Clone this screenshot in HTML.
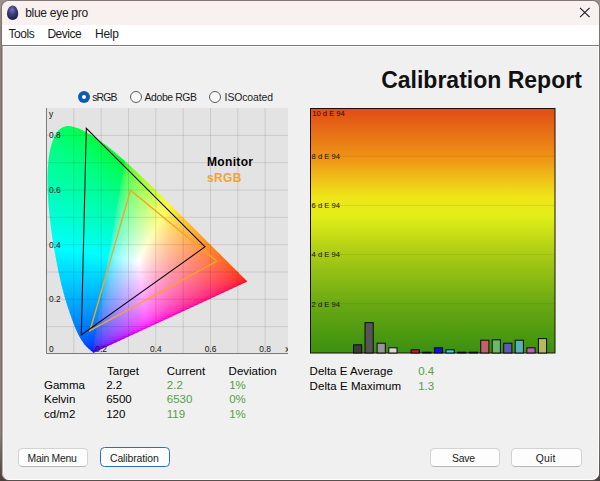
<!DOCTYPE html>
<html><head><meta charset="utf-8"><title>blue eye pro</title><style>
html,body{margin:0;padding:0}
body{width:600px;height:481px;overflow:hidden;position:relative;background:linear-gradient(#9a8f8b,#8f807a 10%,#8f807a 90%,#4a3e38);font-family:"Liberation Sans",sans-serif;color:#000}
.abs{position:absolute}
#win{position:absolute;left:2px;top:1px;width:597px;height:478.5px;background:#f0f0f0;border-radius:7px;overflow:hidden;box-shadow:0 0 0 1px rgba(105,95,92,.5)}
#title{position:absolute;left:0;top:0;width:597px;height:24px;background:#f9f1ef}
#menu{position:absolute;left:0;top:24px;width:597px;height:19.5px;background:#fff}
#mline{position:absolute;left:0;top:43.5px;width:597px;height:1.5px;background:#7c7c7c;box-shadow:0 1px 0 #f9f9f9}
#lline{position:absolute;left:0;top:45px;width:597px;height:433.5px;border-radius:0 0 7px 7px;box-shadow:inset -1px -1px 0 #fff,inset 1px 0 0 rgba(120,112,110,.55),inset 2px 0 0 rgba(255,255,255,.6)}
.t{position:absolute;white-space:nowrap;line-height:1}
.btn{position:absolute;border:1px solid #d2d2d2;border-bottom-color:#b8b8b8;border-radius:4.5px;background:#fdfdfd;box-sizing:border-box}
.g{color:#55a03a}
</style></head><body>
<div id="win"><div id="title"></div><div id="menu"></div><div id="mline"></div><div id="lline"></div></div>
<svg class="abs" style="left:5px;top:4px" width="16" height="18" viewBox="0 0 16 18"><defs><radialGradient id="egg" cx="45%" cy="30%" r="75%"><stop offset="0" stop-color="#7676b0"/><stop offset=".45" stop-color="#3c3c7c"/><stop offset="1" stop-color="#191940"/></radialGradient></defs><path d="M7.6 1.6C11 1.6 13.2 6 13.2 9.8C13.2 13.6 10.8 16 7.6 16C4.4 16 2 13.6 2 9.8C2 6 4.2 1.6 7.6 1.6Z" fill="url(#egg)"/></svg>
<div class="t" style="left:25.2px;top:7.24px;font-size:12px;letter-spacing:-0.28px;color:#1a1a1a">blue eye pro</div>
<svg class="abs" style="left:579px;top:7px" width="12" height="11" viewBox="0 0 12 11"><path d="M1 .9L10.6 10.1M10.6 .9L1 10.1" stroke="#1c1c1c" stroke-width="1.15" fill="none"/></svg>
<div class="t" style="left:8.4px;top:27.94px;font-size:12px;letter-spacing:-0.42px;color:#1a1a1a">Tools</div>
<div class="t" style="left:47.4px;top:27.94px;font-size:12px;letter-spacing:-0.5px;color:#1a1a1a">Device</div>
<div class="t" style="left:95.1px;top:27.94px;font-size:12px;letter-spacing:-0.3px;color:#1a1a1a">Help</div>
<div class="t" style="left:381.2px;top:68.83px;font-size:23px;font-weight:bold;color:#111">Calibration Report</div>
<div class="abs" style="left:77.8px;top:90.6px;width:12.4px;height:12.4px;border-radius:50%;background:#0f5cae"></div><div class="abs" style="left:81.7px;top:94.5px;width:4.6px;height:4.6px;border-radius:50%;background:#fff"></div>
<div class="t" style="left:92.2px;top:92.70px;font-size:10.4px;letter-spacing:-0.8px;color:#1a1a1a">sRGB</div>
<div class="abs" style="left:129.5px;top:90.6px;width:12.4px;height:12.4px;border-radius:50%;box-sizing:border-box;border:1px solid #5c5c5c;background:#f8f8f8"></div>
<div class="t" style="left:144.6px;top:92.70px;font-size:10.4px;letter-spacing:-0.4px;color:#1a1a1a">Adobe RGB</div>
<div class="abs" style="left:209.10000000000002px;top:90.6px;width:12.4px;height:12.4px;border-radius:50%;box-sizing:border-box;border:1px solid #5c5c5c;background:#f8f8f8"></div>
<div class="t" style="left:224.6px;top:92.70px;font-size:10.4px;letter-spacing:-0.08px;color:#1a1a1a">ISOcoated</div>
<svg class="abs" style="left:46px;top:108px" width="242" height="246" viewBox="0 0 242 246"><rect width="242" height="246" fill="#e3e3e3"/><defs><clipPath id="loc"><path d="M48.1 244.6L48.1 244.6L48.1 244.6L48.0 244.6L48.0 244.7L48.0 244.7L48.0 244.7L47.9 244.6L47.9 244.7L47.9 244.7L47.9 244.7L47.8 244.7L47.8 244.7L47.8 244.7L47.7 244.7L47.7 244.7L47.6 244.7L47.6 244.7L47.5 244.7L47.4 244.7L47.3 244.6L47.2 244.5L47.1 244.5L47.0 244.4L46.8 244.3L46.7 244.1L46.5 244.0L46.2 243.8L46.0 243.6L45.7 243.3L45.4 243.0L45.1 242.7L44.7 242.4L44.3 242.0L43.8 241.6L43.3 241.2L42.7 240.7L42.1 240.1L41.4 239.5L40.7 238.7L39.8 237.9L39.0 236.9L38.0 235.8L37.0 234.3L35.8 232.5L34.4 230.2L32.9 227.5L31.3 224.2L29.5 220.2L27.6 215.4L25.5 209.7L23.1 203.1L20.6 195.4L18.0 186.6L15.4 176.6L12.9 165.4L10.4 153.1L8.0 140.0L5.9 126.4L4.1 112.6L2.7 98.8L1.8 85.5L1.5 73.0L1.8 61.3L2.7 50.5L4.3 41.0L6.6 32.9L9.5 26.6L12.9 22.1L16.7 19.3L20.8 18.1L25.1 18.3L29.5 19.4L33.9 21.1L38.4 23.3L42.8 25.8L47.0 28.3L51.2 31.0L55.2 33.8L59.3 36.8L63.3 39.8L67.2 43.0L71.2 46.4L75.1 49.8L79.0 53.2L82.9 56.8L86.8 60.4L90.7 64.1L94.7 67.8L98.6 71.6L102.5 75.3L106.4 79.1L110.3 83.0L114.1 86.8L118.0 90.6L121.9 94.4L125.7 98.2L129.5 102.0L133.2 105.7L136.9 109.4L140.6 113.0L144.1 116.6L147.7 120.1L151.1 123.5L154.4 126.8L157.7 130.1L160.8 133.2L163.8 136.2L166.7 139.0L169.3 141.7L171.9 144.2L174.3 146.6L176.6 148.9L178.7 151.0L180.7 152.9L182.5 154.7L184.1 156.4L185.6 157.9L187.0 159.3L188.3 160.6L189.5 161.7L190.5 162.8L191.5 163.8L192.4 164.6L193.2 165.4L194.0 166.2L194.7 166.9L195.3 167.5L195.9 168.2L196.5 168.7L197.0 169.2L197.5 169.7L197.9 170.1L198.3 170.5L198.6 170.8L198.9 171.1L199.2 171.4L199.4 171.6L199.6 171.8L199.8 172.0L200.0 172.2L200.1 172.3L200.3 172.5L200.4 172.6L200.5 172.7L200.6 172.8L200.6 172.8L200.7 172.9L200.8 173.0L200.9 173.1L200.9 173.1L201.0 173.2L201.1 173.3L201.1 173.3L201.2 173.4L201.2 173.4L201.2 173.4L201.3 173.5L201.3 173.5L201.3 173.5L201.3 173.5Z"/></clipPath><linearGradient id="r0" gradientUnits="userSpaceOnUse" x1="14.5" x2="31.5"><stop offset="0" stop-color="#00ff64"/><stop offset="1" stop-color="#00ff4a"/></linearGradient><linearGradient id="r1" gradientUnits="userSpaceOnUse" x1="12.5" x2="36.5"><stop offset="0" stop-color="#00ff69"/><stop offset="0.583" stop-color="#00ff57"/><stop offset="1" stop-color="#0f4"/></linearGradient><linearGradient id="r2" gradientUnits="userSpaceOnUse" x1="10.5" x2="40.5"><stop offset="0" stop-color="#00ff6e"/><stop offset="0.6" stop-color="#00ff57"/><stop offset="1" stop-color="#00ff40"/></linearGradient><linearGradient id="r3" gradientUnits="userSpaceOnUse" x1="8.5" x2="43.5"><stop offset="0" stop-color="#00ff72"/><stop offset="0.6" stop-color="#00ff59"/><stop offset="1" stop-color="#00ff3e"/></linearGradient><linearGradient id="r4" gradientUnits="userSpaceOnUse" x1="7.5" x2="47.5"><stop offset="0" stop-color="#00ff76"/><stop offset="0.6" stop-color="#00ff5a"/><stop offset="1" stop-color="#00ff38"/></linearGradient><linearGradient id="r5" gradientUnits="userSpaceOnUse" x1="6.5" x2="50.5"><stop offset="0" stop-color="#00ff79"/><stop offset="0.614" stop-color="#00ff5a"/><stop offset="0.841" stop-color="#00ff48"/><stop offset="1" stop-color="#00ff35"/></linearGradient><linearGradient id="r6" gradientUnits="userSpaceOnUse" x1="5.5" x2="53.5"><stop offset="0" stop-color="#00ff7d"/><stop offset="0.625" stop-color="#00ff5b"/><stop offset="0.854" stop-color="#00ff46"/><stop offset="1" stop-color="#00ff32"/></linearGradient><linearGradient id="r7" gradientUnits="userSpaceOnUse" x1="4.5" x2="56.5"><stop offset="0" stop-color="#00ff80"/><stop offset="0.654" stop-color="#00ff5a"/><stop offset="0.865" stop-color="#0f4"/><stop offset="1" stop-color="#00ff2e"/></linearGradient><linearGradient id="r8" gradientUnits="userSpaceOnUse" x1="4.5" x2="59.5"><stop offset="0" stop-color="#00ff82"/><stop offset="0.364" stop-color="#00ff6f"/><stop offset="0.655" stop-color="#00ff5a"/><stop offset="0.873" stop-color="#00ff42"/><stop offset="1" stop-color="#00ff2a"/></linearGradient><linearGradient id="r9" gradientUnits="userSpaceOnUse" x1="3.5" x2="61.5"><stop offset="0" stop-color="#00ff85"/><stop offset="0.362" stop-color="#00ff72"/><stop offset="0.655" stop-color="#00ff5c"/><stop offset="0.862" stop-color="#00ff45"/><stop offset="1" stop-color="#00ff2a"/></linearGradient><linearGradient id="r10" gradientUnits="userSpaceOnUse" x1="3.5" x2="64.5"><stop offset="0" stop-color="#0f8"/><stop offset="0.377" stop-color="#00ff73"/><stop offset="0.672" stop-color="#00ff5b"/><stop offset="0.885" stop-color="#00ff40"/><stop offset="1" stop-color="#00ff25"/></linearGradient><linearGradient id="r11" gradientUnits="userSpaceOnUse" x1="2.5" x2="66.5"><stop offset="0" stop-color="#00ff8b"/><stop offset="0.375" stop-color="#00ff75"/><stop offset="0.672" stop-color="#00ff5d"/><stop offset="0.875" stop-color="#00ff43"/><stop offset="0.953" stop-color="#00ff34"/><stop offset="1" stop-color="#00ff25"/></linearGradient><linearGradient id="r12" gradientUnits="userSpaceOnUse" x1="2.5" x2="69.5"><stop offset="0" stop-color="#00ff8d"/><stop offset="0.403" stop-color="#00ff75"/><stop offset="0.701" stop-color="#00ff5b"/><stop offset="0.896" stop-color="#00ff3e"/><stop offset="0.955" stop-color="#00ff30"/><stop offset="1" stop-color="#00ff1e"/></linearGradient><linearGradient id="r13" gradientUnits="userSpaceOnUse" x1="1.5" x2="71.5"><stop offset="0" stop-color="#00ff90"/><stop offset="0.4" stop-color="#00ff78"/><stop offset="0.7" stop-color="#00ff5d"/><stop offset="0.9" stop-color="#00ff3f"/><stop offset="0.957" stop-color="#00ff30"/><stop offset="1" stop-color="#00ff1e"/></linearGradient><linearGradient id="r14" gradientUnits="userSpaceOnUse" x1="1.5" x2="74.5"><stop offset="0" stop-color="#00ff92"/><stop offset="0.425" stop-color="#00ff78"/><stop offset="0.726" stop-color="#00ff5a"/><stop offset="0.918" stop-color="#00ff38"/><stop offset="0.973" stop-color="#00ff26"/><stop offset="1" stop-color="#00ff13"/></linearGradient><linearGradient id="r15" gradientUnits="userSpaceOnUse" x1="1.5" x2="76.5"><stop offset="0" stop-color="#00ff94"/><stop offset="0.413" stop-color="#00ff7a"/><stop offset="0.72" stop-color="#00ff5c"/><stop offset="0.84" stop-color="#00ff4a"/><stop offset="0.92" stop-color="#00ff39"/><stop offset="0.973" stop-color="#00ff26"/><stop offset="1" stop-color="#00ff13"/></linearGradient><linearGradient id="r16" gradientUnits="userSpaceOnUse" x1="1.5" x2="78.5"><stop offset="0" stop-color="#00ff97"/><stop offset="0.416" stop-color="#00ff7c"/><stop offset="0.727" stop-color="#00ff5d"/><stop offset="0.844" stop-color="#00ff4b"/><stop offset="0.922" stop-color="#00ff39"/><stop offset="0.974" stop-color="#00ff26"/><stop offset="1" stop-color="#00ff13"/></linearGradient><linearGradient id="r17" gradientUnits="userSpaceOnUse" x1="0.5" x2="80.5"><stop offset="0" stop-color="#0f9"/><stop offset="0.375" stop-color="#00ff82"/><stop offset="0.662" stop-color="#00ff67"/><stop offset="0.863" stop-color="#00ff49"/><stop offset="0.925" stop-color="#00ff3a"/><stop offset="0.975" stop-color="#00ff27"/><stop offset="0.988" stop-color="#28ff1f"/><stop offset="1" stop-color="#36ff13"/></linearGradient><linearGradient id="r18" gradientUnits="userSpaceOnUse" x1="0.5" x2="83.5"><stop offset="0" stop-color="#00ff9c"/><stop offset="0.337" stop-color="#00ff86"/><stop offset="0.602" stop-color="#00ff6f"/><stop offset="0.795" stop-color="#0f5"/><stop offset="0.928" stop-color="#00ff36"/><stop offset="0.952" stop-color="#2eff2d"/><stop offset="0.976" stop-color="#44ff1f"/><stop offset="0.988" stop-color="#4cff13"/><stop offset="1" stop-color="#53ff00"/></linearGradient><linearGradient id="r19" gradientUnits="userSpaceOnUse" x1="0.5" x2="85.5"><stop offset="0" stop-color="#00ff9e"/><stop offset="0.318" stop-color="#00ff8a"/><stop offset="0.576" stop-color="#00ff73"/><stop offset="0.776" stop-color="#00ff59"/><stop offset="0.906" stop-color="#00ff3e"/><stop offset="0.918" stop-color="#21ff3a"/><stop offset="0.929" stop-color="#33ff36"/><stop offset="0.976" stop-color="#56ff1f"/><stop offset="0.988" stop-color="#5cff13"/><stop offset="1" stop-color="#62ff00"/></linearGradient><linearGradient id="r20" gradientUnits="userSpaceOnUse" x1="0.5" x2="87.5"><stop offset="0" stop-color="#00ffa0"/><stop offset="0.31" stop-color="#00ff8c"/><stop offset="0.563" stop-color="#00ff76"/><stop offset="0.747" stop-color="#00ff5f"/><stop offset="0.885" stop-color="#00ff45"/><stop offset="0.897" stop-color="#29ff42"/><stop offset="0.908" stop-color="#37ff3e"/><stop offset="0.931" stop-color="#4aff37"/><stop offset="0.977" stop-color="#64ff20"/><stop offset="0.989" stop-color="#69ff13"/><stop offset="1" stop-color="#6eff00"/></linearGradient><linearGradient id="r21" gradientUnits="userSpaceOnUse" x1="0.5" x2="89.5"><stop offset="0" stop-color="#00ffa2"/><stop offset="0.528" stop-color="#00ff7c"/><stop offset="0.719" stop-color="#00ff65"/><stop offset="0.854" stop-color="#00ff4d"/><stop offset="0.876" stop-color="#2fff48"/><stop offset="0.899" stop-color="#45ff42"/><stop offset="0.966" stop-color="#6cff28"/><stop offset="0.989" stop-color="#75ff13"/><stop offset="1" stop-color="#79ff00"/></linearGradient><linearGradient id="r22" gradientUnits="userSpaceOnUse" x1="0.5" x2="91.5"><stop offset="0" stop-color="#00ffa4"/><stop offset="0.505" stop-color="#00ff80"/><stop offset="0.692" stop-color="#00ff6b"/><stop offset="0.835" stop-color="#00ff53"/><stop offset="0.846" stop-color="#23ff50"/><stop offset="0.857" stop-color="#34ff4e"/><stop offset="0.879" stop-color="#49ff49"/><stop offset="0.912" stop-color="#5eff3f"/><stop offset="0.967" stop-color="#77ff28"/><stop offset="0.989" stop-color="#7fff13"/><stop offset="1" stop-color="#83ff00"/></linearGradient><linearGradient id="r23" gradientUnits="userSpaceOnUse" x1="0.5" x2="93.5"><stop offset="0" stop-color="#00ffa7"/><stop offset="0.495" stop-color="#00ff83"/><stop offset="0.677" stop-color="#00ff6e"/><stop offset="0.817" stop-color="#00ff58"/><stop offset="0.828" stop-color="#2aff56"/><stop offset="0.839" stop-color="#38ff53"/><stop offset="0.86" stop-color="#4cff4e"/><stop offset="0.903" stop-color="#66ff43"/><stop offset="0.957" stop-color="#7dff2e"/><stop offset="0.978" stop-color="#85ff20"/><stop offset="0.989" stop-color="#89ff13"/><stop offset="1" stop-color="#8dff00"/></linearGradient><linearGradient id="r24" gradientUnits="userSpaceOnUse" x1="0.5" x2="95.5"><stop offset="0" stop-color="#00ffa9"/><stop offset="0.474" stop-color="#00ff87"/><stop offset="0.653" stop-color="#00ff73"/><stop offset="0.789" stop-color="#00ff5e"/><stop offset="0.811" stop-color="#30ff5a"/><stop offset="0.842" stop-color="#4fff54"/><stop offset="0.895" stop-color="#6dff47"/><stop offset="0.958" stop-color="#87ff2f"/><stop offset="0.979" stop-color="#8fff20"/><stop offset="0.989" stop-color="#92ff14"/><stop offset="1" stop-color="#96ff00"/></linearGradient><linearGradient id="r25" gradientUnits="userSpaceOnUse" x1="0.5" x2="97.5"><stop offset="0" stop-color="#00ffab"/><stop offset="0.464" stop-color="#00ff8a"/><stop offset="0.773" stop-color="#00ff63"/><stop offset="0.784" stop-color="#24ff61"/><stop offset="0.794" stop-color="#35ff5f"/><stop offset="0.825" stop-color="#52ff59"/><stop offset="0.876" stop-color="#6fff4d"/><stop offset="0.948" stop-color="#8dff34"/><stop offset="0.979" stop-color="#98ff21"/><stop offset="0.99" stop-color="#9bff14"/><stop offset="1" stop-color="#9eff00"/></linearGradient><linearGradient id="r26" gradientUnits="userSpaceOnUse" x1="0.5" x2="100.5"><stop offset="0" stop-color="#00ffad"/><stop offset="0.44" stop-color="#00ff8e"/><stop offset="0.75" stop-color="#00ff67"/><stop offset="0.76" stop-color="#2bff65"/><stop offset="0.78" stop-color="#44ff62"/><stop offset="0.81" stop-color="#5bff5c"/><stop offset="0.87" stop-color="#7bff4e"/><stop offset="0.94" stop-color="#96ff35"/><stop offset="0.97" stop-color="#a0ff21"/><stop offset="0.98" stop-color="#a4ff14"/><stop offset="0.99" stop-color="#a7ff00"/><stop offset="1" stop-color="#af0"/></linearGradient><linearGradient id="r27" gradientUnits="userSpaceOnUse" x1="0.5" x2="102.5"><stop offset="0" stop-color="#00ffaf"/><stop offset="0.422" stop-color="#00ff91"/><stop offset="0.725" stop-color="#00ff6d"/><stop offset="0.745" stop-color="#31ff6a"/><stop offset="0.765" stop-color="#48ff66"/><stop offset="0.794" stop-color="#5eff61"/><stop offset="0.853" stop-color="#7dff53"/><stop offset="0.931" stop-color="#9cff3a"/><stop offset="0.971" stop-color="#a9ff21"/><stop offset="0.98" stop-color="#acff14"/><stop offset="0.99" stop-color="#afff00"/><stop offset="1" stop-color="#b2ff00"/></linearGradient><linearGradient id="r28" gradientUnits="userSpaceOnUse" x1="0.5" x2="104.5"><stop offset="0" stop-color="#00ffb2"/><stop offset="0.413" stop-color="#00ff94"/><stop offset="0.712" stop-color="#00ff71"/><stop offset="0.721" stop-color="#25ff6f"/><stop offset="0.731" stop-color="#36ff6e"/><stop offset="0.75" stop-color="#4bff6a"/><stop offset="0.779" stop-color="#61ff65"/><stop offset="0.846" stop-color="#84ff57"/><stop offset="0.933" stop-color="#a4ff3a"/><stop offset="0.971" stop-color="#b1ff21"/><stop offset="0.981" stop-color="#b4ff14"/><stop offset="0.99" stop-color="#b7ff00"/><stop offset="1" stop-color="#b9ff00"/></linearGradient><linearGradient id="r29" gradientUnits="userSpaceOnUse" x1="0.5" x2="106.5"><stop offset="0" stop-color="#00ffb4"/><stop offset="0.396" stop-color="#00ff98"/><stop offset="0.689" stop-color="#00ff76"/><stop offset="0.698" stop-color="#05ff75"/><stop offset="0.708" stop-color="#2cff73"/><stop offset="0.717" stop-color="#3bff72"/><stop offset="0.736" stop-color="#4eff6f"/><stop offset="0.764" stop-color="#63ff6a"/><stop offset="0.83" stop-color="#86ff5c"/><stop offset="0.934" stop-color="#adff3b"/><stop offset="0.972" stop-color="#b9ff22"/><stop offset="0.981" stop-color="#bbff14"/><stop offset="0.991" stop-color="#beff00"/><stop offset="1" stop-color="#c1ff00"/></linearGradient><linearGradient id="r30" gradientUnits="userSpaceOnUse" x1="0.5" x2="108.5"><stop offset="0" stop-color="#00ffb6"/><stop offset="0.389" stop-color="#00ff9a"/><stop offset="0.676" stop-color="#00ff7a"/><stop offset="0.685" stop-color="#1cff79"/><stop offset="0.694" stop-color="#32ff77"/><stop offset="0.704" stop-color="#3fff76"/><stop offset="0.722" stop-color="#52ff73"/><stop offset="0.75" stop-color="#66ff6e"/><stop offset="0.824" stop-color="#8cff5f"/><stop offset="0.926" stop-color="#b2ff3f"/><stop offset="0.963" stop-color="#bdff2a"/><stop offset="0.981" stop-color="#c3ff14"/><stop offset="0.991" stop-color="#c6ff00"/><stop offset="1" stop-color="#c9ff00"/></linearGradient><linearGradient id="r31" gradientUnits="userSpaceOnUse" x1="0.5" x2="110.5"><stop offset="0" stop-color="#00ffb8"/><stop offset="0.382" stop-color="#00ff9d"/><stop offset="0.664" stop-color="#00ff7e"/><stop offset="0.673" stop-color="#26ff7c"/><stop offset="0.682" stop-color="#37ff7b"/><stop offset="0.7" stop-color="#4cff78"/><stop offset="0.736" stop-color="#68ff72"/><stop offset="0.818" stop-color="#92ff62"/><stop offset="0.927" stop-color="#baff40"/><stop offset="0.964" stop-color="#c5ff2b"/><stop offset="0.982" stop-color="#cbff14"/><stop offset="0.991" stop-color="#cdff00"/><stop offset="1" stop-color="#d0ff00"/></linearGradient><linearGradient id="r32" gradientUnits="userSpaceOnUse" x1="0.5" x2="112.5"><stop offset="0" stop-color="#0fb"/><stop offset="0.366" stop-color="#00ffa1"/><stop offset="0.643" stop-color="#00ff82"/><stop offset="0.652" stop-color="#0aff81"/><stop offset="0.661" stop-color="#2dff80"/><stop offset="0.67" stop-color="#3cff7f"/><stop offset="0.696" stop-color="#58ff7a"/><stop offset="0.732" stop-color="#70ff75"/><stop offset="0.812" stop-color="#98ff65"/><stop offset="0.92" stop-color="#bfff44"/><stop offset="0.964" stop-color="#cdff2b"/><stop offset="0.982" stop-color="#d2ff15"/><stop offset="0.991" stop-color="#d5ff00"/><stop offset="1" stop-color="#d7ff00"/></linearGradient><linearGradient id="r33" gradientUnits="userSpaceOnUse" x1="0.5" x2="114.5"><stop offset="0" stop-color="#00ffbd"/><stop offset="0.36" stop-color="#00ffa4"/><stop offset="0.632" stop-color="#00ff86"/><stop offset="0.64" stop-color="#1eff85"/><stop offset="0.649" stop-color="#33ff84"/><stop offset="0.658" stop-color="#40ff82"/><stop offset="0.684" stop-color="#5bff7e"/><stop offset="0.719" stop-color="#73ff79"/><stop offset="0.807" stop-color="#9dff68"/><stop offset="0.921" stop-color="#c7ff45"/><stop offset="0.965" stop-color="#d4ff2c"/><stop offset="0.982" stop-color="#daff15"/><stop offset="0.991" stop-color="#dcff00"/><stop offset="1" stop-color="#dfff00"/></linearGradient><linearGradient id="r34" gradientUnits="userSpaceOnUse" x1="0.5" x2="116.5"><stop offset="0" stop-color="#00ffbf"/><stop offset="0.353" stop-color="#00ffa6"/><stop offset="0.621" stop-color="#00ff8a"/><stop offset="0.629" stop-color="#27ff88"/><stop offset="0.647" stop-color="#44ff86"/><stop offset="0.672" stop-color="#5dff82"/><stop offset="0.707" stop-color="#75ff7d"/><stop offset="0.793" stop-color="#a0ff6c"/><stop offset="0.914" stop-color="#ccff49"/><stop offset="0.966" stop-color="#dcff2c"/><stop offset="0.983" stop-color="#e1ff15"/><stop offset="0.991" stop-color="#e4ff00"/><stop offset="1" stop-color="#e6ff00"/></linearGradient><linearGradient id="r35" gradientUnits="userSpaceOnUse" x1="0.5" x2="118.5"><stop offset="0" stop-color="#00ffc1"/><stop offset="0.339" stop-color="#0fa"/><stop offset="0.602" stop-color="#00ff8e"/><stop offset="0.61" stop-color="#0eff8d"/><stop offset="0.619" stop-color="#2eff8c"/><stop offset="0.636" stop-color="#48ff89"/><stop offset="0.661" stop-color="#60ff86"/><stop offset="0.695" stop-color="#78ff80"/><stop offset="0.788" stop-color="#a5ff6f"/><stop offset="0.856" stop-color="#bfff5e"/><stop offset="0.915" stop-color="#d3ff4a"/><stop offset="0.966" stop-color="#e3ff2c"/><stop offset="0.983" stop-color="#e9ff15"/><stop offset="0.992" stop-color="#ebff00"/><stop offset="1" stop-color="#ef0"/></linearGradient><linearGradient id="r36" gradientUnits="userSpaceOnUse" x1="0.5" x2="120.5"><stop offset="0" stop-color="#00ffc4"/><stop offset="0.333" stop-color="#00ffad"/><stop offset="0.592" stop-color="#00ff92"/><stop offset="0.6" stop-color="#1fff90"/><stop offset="0.608" stop-color="#34ff8f"/><stop offset="0.617" stop-color="#42ff8e"/><stop offset="0.642" stop-color="#5cff8b"/><stop offset="0.683" stop-color="#7aff84"/><stop offset="0.775" stop-color="#a7ff74"/><stop offset="0.858" stop-color="#c7ff5f"/><stop offset="0.917" stop-color="#dbff4b"/><stop offset="0.967" stop-color="#ebff2d"/><stop offset="0.983" stop-color="#f0ff15"/><stop offset="0.992" stop-color="#f2ff00"/><stop offset="1" stop-color="#f5ff00"/></linearGradient><linearGradient id="r37" gradientUnits="userSpaceOnUse" x1="0.5" x2="122.5"><stop offset="0" stop-color="#00ffc6"/><stop offset="0.328" stop-color="#00ffaf"/><stop offset="0.582" stop-color="#00ff95"/><stop offset="0.59" stop-color="#28ff94"/><stop offset="0.607" stop-color="#46ff92"/><stop offset="0.631" stop-color="#5fff8e"/><stop offset="0.672" stop-color="#7cff88"/><stop offset="0.77" stop-color="#adff76"/><stop offset="0.852" stop-color="#ccff63"/><stop offset="0.91" stop-color="#e0ff4f"/><stop offset="0.943" stop-color="#ebff3f"/><stop offset="0.967" stop-color="#f2ff2d"/><stop offset="0.984" stop-color="#f7ff15"/><stop offset="0.992" stop-color="#faff00"/><stop offset="1" stop-color="#fcff00"/></linearGradient><linearGradient id="r38" gradientUnits="userSpaceOnUse" x1="0.5" x2="124.5"><stop offset="0" stop-color="#00ffc8"/><stop offset="0.315" stop-color="#00ffb3"/><stop offset="0.565" stop-color="#0f9"/><stop offset="0.573" stop-color="#10ff98"/><stop offset="0.581" stop-color="#2fff97"/><stop offset="0.597" stop-color="#4aff95"/><stop offset="0.629" stop-color="#69ff91"/><stop offset="0.669" stop-color="#84ff8b"/><stop offset="0.734" stop-color="#a5ff80"/><stop offset="0.815" stop-color="#c6ff6e"/><stop offset="0.911" stop-color="#e8ff50"/><stop offset="0.944" stop-color="#f2ff40"/><stop offset="0.968" stop-color="#faff2e"/><stop offset="0.984" stop-color="#ffff15"/><stop offset="0.992" stop-color="#fffd00"/><stop offset="1" stop-color="#fffa00"/></linearGradient><linearGradient id="r39" gradientUnits="userSpaceOnUse" x1="1.5" x2="126.5"><stop offset="0" stop-color="#00ffca"/><stop offset="0.304" stop-color="#00ffb6"/><stop offset="0.552" stop-color="#00ff9d"/><stop offset="0.56" stop-color="#20ff9c"/><stop offset="0.568" stop-color="#36ff9b"/><stop offset="0.584" stop-color="#4dff99"/><stop offset="0.616" stop-color="#6bff94"/><stop offset="0.664" stop-color="#8bff8d"/><stop offset="0.728" stop-color="#abff82"/><stop offset="0.808" stop-color="#cbff71"/><stop offset="0.912" stop-color="#f0ff51"/><stop offset="0.96" stop-color="#ffff35"/><stop offset="0.976" stop-color="#fffa24"/><stop offset="0.992" stop-color="#fff500"/><stop offset="1" stop-color="#fff300"/></linearGradient><linearGradient id="r40" gradientUnits="userSpaceOnUse" x1="1.5" x2="128.5"><stop offset="0" stop-color="#00ffcd"/><stop offset="0.299" stop-color="#00ffb8"/><stop offset="0.543" stop-color="#00ffa0"/><stop offset="0.551" stop-color="#2aff9f"/><stop offset="0.559" stop-color="#3bff9e"/><stop offset="0.575" stop-color="#51ff9c"/><stop offset="0.614" stop-color="#74ff97"/><stop offset="0.661" stop-color="#91ff90"/><stop offset="0.803" stop-color="#d0ff75"/><stop offset="0.906" stop-color="#f5ff55"/><stop offset="0.937" stop-color="#ffff46"/><stop offset="0.961" stop-color="#fff734"/><stop offset="0.976" stop-color="#fff323"/><stop offset="0.992" stop-color="#fe0"/><stop offset="1" stop-color="#ffec00"/></linearGradient><linearGradient id="r41" gradientUnits="userSpaceOnUse" x1="1.5" x2="130.5"><stop offset="0" stop-color="#00ffcf"/><stop offset="0.295" stop-color="#0fb"/><stop offset="0.527" stop-color="#00ffa4"/><stop offset="0.535" stop-color="#12ffa3"/><stop offset="0.543" stop-color="#31ffa3"/><stop offset="0.55" stop-color="#40ffa2"/><stop offset="0.566" stop-color="#55ffa0"/><stop offset="0.605" stop-color="#77ff9a"/><stop offset="0.659" stop-color="#98ff92"/><stop offset="0.806" stop-color="#d9ff76"/><stop offset="0.907" stop-color="#fdff56"/><stop offset="0.961" stop-color="#fff033"/><stop offset="0.977" stop-color="#ffec23"/><stop offset="0.992" stop-color="#ffe800"/><stop offset="1" stop-color="#ffe600"/></linearGradient><linearGradient id="r42" gradientUnits="userSpaceOnUse" x1="1.5" x2="132.5"><stop offset="0" stop-color="#00ffd1"/><stop offset="0.29" stop-color="#00ffbe"/><stop offset="0.519" stop-color="#00ffa8"/><stop offset="0.527" stop-color="#22ffa7"/><stop offset="0.534" stop-color="#37ffa6"/><stop offset="0.557" stop-color="#58ffa3"/><stop offset="0.595" stop-color="#79ff9e"/><stop offset="0.656" stop-color="#9fff95"/><stop offset="0.794" stop-color="#dbff7b"/><stop offset="0.893" stop-color="#ffff5d"/><stop offset="0.962" stop-color="#ffe932"/><stop offset="0.977" stop-color="#ffe522"/><stop offset="0.992" stop-color="#ffe100"/><stop offset="1" stop-color="#ffdf00"/></linearGradient><linearGradient id="r43" gradientUnits="userSpaceOnUse" x1="1.5" x2="134.5"><stop offset="0" stop-color="#00ffd4"/><stop offset="0.278" stop-color="#00ffc1"/><stop offset="0.511" stop-color="#00ffab"/><stop offset="0.519" stop-color="#2bffaa"/><stop offset="0.526" stop-color="#3cffa9"/><stop offset="0.541" stop-color="#53ffa7"/><stop offset="0.586" stop-color="#7cffa2"/><stop offset="0.654" stop-color="#a5ff98"/><stop offset="0.782" stop-color="#deff80"/><stop offset="0.872" stop-color="#ff6"/><stop offset="0.955" stop-color="#ffe538"/><stop offset="0.977" stop-color="#ffdf22"/><stop offset="0.992" stop-color="#ffdb00"/><stop offset="1" stop-color="#ffd900"/></linearGradient><linearGradient id="r44" gradientUnits="userSpaceOnUse" x1="1.5" x2="136.5"><stop offset="0" stop-color="#00ffd6"/><stop offset="0.274" stop-color="#00ffc4"/><stop offset="0.496" stop-color="#00ffaf"/><stop offset="0.504" stop-color="#14ffae"/><stop offset="0.511" stop-color="#32ffae"/><stop offset="0.526" stop-color="#4dffac"/><stop offset="0.541" stop-color="#5fffaa"/><stop offset="0.593" stop-color="#89ffa3"/><stop offset="0.659" stop-color="#afff99"/><stop offset="0.77" stop-color="#e0ff84"/><stop offset="0.852" stop-color="#ffff6f"/><stop offset="0.919" stop-color="#ffe94e"/><stop offset="0.956" stop-color="#ffdf37"/><stop offset="0.978" stop-color="#ffd921"/><stop offset="0.993" stop-color="#ffd500"/><stop offset="1" stop-color="#ffd400"/></linearGradient><linearGradient id="r45" gradientUnits="userSpaceOnUse" x1="2.5" x2="138.5"><stop offset="0" stop-color="#00ffd8"/><stop offset="0.265" stop-color="#00ffc7"/><stop offset="0.485" stop-color="#00ffb3"/><stop offset="0.493" stop-color="#23ffb2"/><stop offset="0.5" stop-color="#38ffb1"/><stop offset="0.515" stop-color="#51ffaf"/><stop offset="0.529" stop-color="#62ffae"/><stop offset="0.581" stop-color="#8bffa7"/><stop offset="0.654" stop-color="#b5ff9c"/><stop offset="0.831" stop-color="#fffe77"/><stop offset="0.949" stop-color="#ffda3b"/><stop offset="0.978" stop-color="#ffd321"/><stop offset="0.993" stop-color="#ffd000"/><stop offset="1" stop-color="#ffce00"/></linearGradient><linearGradient id="r46" gradientUnits="userSpaceOnUse" x1="2.5" x2="140.5"><stop offset="0" stop-color="#00ffdb"/><stop offset="0.261" stop-color="#00ffca"/><stop offset="0.478" stop-color="#00ffb6"/><stop offset="0.486" stop-color="#2cffb5"/><stop offset="0.493" stop-color="#3effb4"/><stop offset="0.507" stop-color="#55ffb3"/><stop offset="0.522" stop-color="#65ffb1"/><stop offset="0.58" stop-color="#93ffaa"/><stop offset="0.659" stop-color="#bfff9e"/><stop offset="0.812" stop-color="#fffe7e"/><stop offset="0.877" stop-color="#ffe861"/><stop offset="0.957" stop-color="#ffd235"/><stop offset="0.978" stop-color="#ffcd20"/><stop offset="0.993" stop-color="#ffca00"/><stop offset="1" stop-color="#ffc800"/></linearGradient><linearGradient id="r47" gradientUnits="userSpaceOnUse" x1="2.5" x2="142.5"><stop offset="0" stop-color="#00ffde"/><stop offset="0.464" stop-color="#00ffba"/><stop offset="0.471" stop-color="#16ffb9"/><stop offset="0.479" stop-color="#34ffb9"/><stop offset="0.486" stop-color="#43ffb8"/><stop offset="0.514" stop-color="#68ffb5"/><stop offset="0.571" stop-color="#95ffad"/><stop offset="0.664" stop-color="#c8ffa0"/><stop offset="0.793" stop-color="#fffe85"/><stop offset="0.893" stop-color="#ffdd58"/><stop offset="0.964" stop-color="#ffcb2f"/><stop offset="0.979" stop-color="#ffc820"/><stop offset="0.993" stop-color="#ffc500"/><stop offset="1" stop-color="#ffc300"/></linearGradient><linearGradient id="r48" gradientUnits="userSpaceOnUse" x1="2.5" x2="144.5"><stop offset="0" stop-color="#00ffe0"/><stop offset="0.458" stop-color="#00ffbe"/><stop offset="0.465" stop-color="#24ffbd"/><stop offset="0.472" stop-color="#3affbc"/><stop offset="0.486" stop-color="#53ffbb"/><stop offset="0.507" stop-color="#6bffb8"/><stop offset="0.535" stop-color="#84ffb5"/><stop offset="0.577" stop-color="#a1ffaf"/><stop offset="0.676" stop-color="#d5ffa0"/><stop offset="0.775" stop-color="#fffe8c"/><stop offset="0.908" stop-color="#ffd350"/><stop offset="0.965" stop-color="#ffc52e"/><stop offset="0.979" stop-color="#ffc21f"/><stop offset="0.993" stop-color="#ffbf00"/><stop offset="1" stop-color="#ffbe00"/></linearGradient><linearGradient id="r49" gradientUnits="userSpaceOnUse" x1="3.5" x2="146.5"><stop offset="0" stop-color="#00ffe2"/><stop offset="0.448" stop-color="#00ffc1"/><stop offset="0.455" stop-color="#2effc0"/><stop offset="0.462" stop-color="#3fffc0"/><stop offset="0.476" stop-color="#56ffbe"/><stop offset="0.497" stop-color="#6effbc"/><stop offset="0.524" stop-color="#87ffb8"/><stop offset="0.566" stop-color="#a4ffb3"/><stop offset="0.678" stop-color="#deffa2"/><stop offset="0.755" stop-color="#fffe92"/><stop offset="0.832" stop-color="#ffe271"/><stop offset="0.916" stop-color="#ffcb4b"/><stop offset="0.965" stop-color="#ffc02d"/><stop offset="0.979" stop-color="#ffbd1f"/><stop offset="0.993" stop-color="#ffba00"/><stop offset="1" stop-color="#ffb900"/></linearGradient><linearGradient id="r50" gradientUnits="userSpaceOnUse" x1="3.5" x2="148.5"><stop offset="0" stop-color="#00ffe5"/><stop offset="0.434" stop-color="#00ffc5"/><stop offset="0.448" stop-color="#35ffc4"/><stop offset="0.455" stop-color="#45ffc3"/><stop offset="0.476" stop-color="#63ffc1"/><stop offset="0.497" stop-color="#78ffbf"/><stop offset="0.572" stop-color="#afffb5"/><stop offset="0.697" stop-color="#eeffa2"/><stop offset="0.738" stop-color="#fffe99"/><stop offset="0.828" stop-color="#ffde72"/><stop offset="0.931" stop-color="#ffc243"/><stop offset="0.972" stop-color="#ffb926"/><stop offset="0.979" stop-color="#ffb81e"/><stop offset="0.993" stop-color="#ffb500"/><stop offset="1" stop-color="#ffb400"/></linearGradient><linearGradient id="r51" gradientUnits="userSpaceOnUse" x1="3.5" x2="150.5"><stop offset="0" stop-color="#00ffe8"/><stop offset="0.429" stop-color="#00ffc9"/><stop offset="0.435" stop-color="#26ffc8"/><stop offset="0.442" stop-color="#3bffc7"/><stop offset="0.449" stop-color="#49ffc7"/><stop offset="0.469" stop-color="#66ffc4"/><stop offset="0.497" stop-color="#81ffc1"/><stop offset="0.537" stop-color="#a0ffbd"/><stop offset="0.585" stop-color="#bdffb6"/><stop offset="0.714" stop-color="#fdffa1"/><stop offset="0.823" stop-color="#ffd973"/><stop offset="0.939" stop-color="#ffbb3f"/><stop offset="0.973" stop-color="#ffb426"/><stop offset="0.98" stop-color="#ffb31e"/><stop offset="0.993" stop-color="#ffb000"/><stop offset="1" stop-color="#ffaf00"/></linearGradient><linearGradient id="r52" gradientUnits="userSpaceOnUse" x1="3.5" x2="152.5"><stop offset="0" stop-color="#00ffea"/><stop offset="0.423" stop-color="#0fc"/><stop offset="0.43" stop-color="#2fffcc"/><stop offset="0.436" stop-color="#41ffcb"/><stop offset="0.456" stop-color="#62ffc9"/><stop offset="0.483" stop-color="#7effc6"/><stop offset="0.523" stop-color="#9effc1"/><stop offset="0.57" stop-color="#bcffbb"/><stop offset="0.698" stop-color="#fdffa7"/><stop offset="0.805" stop-color="#ffd879"/><stop offset="0.933" stop-color="#ffb841"/><stop offset="0.973" stop-color="#ffaf25"/><stop offset="0.98" stop-color="#ffae1e"/><stop offset="0.993" stop-color="#ffab00"/><stop offset="1" stop-color="#fa0"/></linearGradient><linearGradient id="r53" gradientUnits="userSpaceOnUse" x1="4.5" x2="154.5"><stop offset="0" stop-color="#00ffed"/><stop offset="0.407" stop-color="#00ffd0"/><stop offset="0.42" stop-color="#37ffcf"/><stop offset="0.427" stop-color="#46ffcf"/><stop offset="0.447" stop-color="#65ffcc"/><stop offset="0.473" stop-color="#81ffca"/><stop offset="0.553" stop-color="#bbffc0"/><stop offset="0.68" stop-color="#fdffad"/><stop offset="0.8" stop-color="#ffd47a"/><stop offset="0.933" stop-color="#ffb241"/><stop offset="0.973" stop-color="#ffaa25"/><stop offset="0.98" stop-color="#ffa91d"/><stop offset="0.993" stop-color="#ffa700"/><stop offset="1" stop-color="#ffa500"/></linearGradient><linearGradient id="r54" gradientUnits="userSpaceOnUse" x1="4.5" x2="156.5"><stop offset="0" stop-color="#00fff0"/><stop offset="0.401" stop-color="#00ffd4"/><stop offset="0.408" stop-color="#28ffd3"/><stop offset="0.414" stop-color="#3dffd3"/><stop offset="0.421" stop-color="#4bffd2"/><stop offset="0.441" stop-color="#69ffd0"/><stop offset="0.461" stop-color="#7effce"/><stop offset="0.493" stop-color="#9affcb"/><stop offset="0.539" stop-color="#baffc5"/><stop offset="0.664" stop-color="#fdffb3"/><stop offset="0.789" stop-color="#ffd17d"/><stop offset="0.934" stop-color="#ffad40"/><stop offset="0.974" stop-color="#ffa625"/><stop offset="0.98" stop-color="#ffa41d"/><stop offset="0.993" stop-color="#ffa200"/><stop offset="1" stop-color="#ffa100"/></linearGradient><linearGradient id="r55" gradientUnits="userSpaceOnUse" x1="4.5" x2="158.5"><stop offset="0" stop-color="#00fff2"/><stop offset="0.396" stop-color="#00ffd8"/><stop offset="0.403" stop-color="#31ffd7"/><stop offset="0.409" stop-color="#43ffd6"/><stop offset="0.422" stop-color="#5bffd5"/><stop offset="0.448" stop-color="#7bffd3"/><stop offset="0.481" stop-color="#98ffcf"/><stop offset="0.526" stop-color="#b8ffca"/><stop offset="0.649" stop-color="#fdffb9"/><stop offset="0.779" stop-color="#ffce80"/><stop offset="0.935" stop-color="#ffa83f"/><stop offset="0.974" stop-color="#ffa124"/><stop offset="0.981" stop-color="#ffa01d"/><stop offset="0.994" stop-color="#ff9d00"/><stop offset="1" stop-color="#ff9c00"/></linearGradient><linearGradient id="r56" gradientUnits="userSpaceOnUse" x1="5.5" x2="160.5"><stop offset="0" stop-color="#00fff5"/><stop offset="0.381" stop-color="#00ffdc"/><stop offset="0.394" stop-color="#38ffdb"/><stop offset="0.4" stop-color="#48ffda"/><stop offset="0.419" stop-color="#68ffd8"/><stop offset="0.439" stop-color="#7effd6"/><stop offset="0.471" stop-color="#9bffd3"/><stop offset="0.516" stop-color="#bbffce"/><stop offset="0.632" stop-color="#fdffbe"/><stop offset="0.768" stop-color="#ffcc83"/><stop offset="0.935" stop-color="#ffa33e"/><stop offset="0.974" stop-color="#ff9c24"/><stop offset="0.981" stop-color="#ff9b1c"/><stop offset="0.994" stop-color="#f90"/><stop offset="1" stop-color="#ff9700"/></linearGradient><linearGradient id="r57" gradientUnits="userSpaceOnUse" x1="5.5" x2="162.5"><stop offset="0" stop-color="#00fff8"/><stop offset="0.376" stop-color="#00ffe0"/><stop offset="0.382" stop-color="#29ffdf"/><stop offset="0.389" stop-color="#3fffdf"/><stop offset="0.395" stop-color="#4dffde"/><stop offset="0.414" stop-color="#6bffdc"/><stop offset="0.433" stop-color="#81ffda"/><stop offset="0.503" stop-color="#baffd3"/><stop offset="0.618" stop-color="#feffc4"/><stop offset="0.752" stop-color="#ffcb88"/><stop offset="0.93" stop-color="#ffa041"/><stop offset="0.975" stop-color="#ff9723"/><stop offset="0.981" stop-color="#ff961c"/><stop offset="0.994" stop-color="#ff9400"/><stop offset="1" stop-color="#ff9300"/></linearGradient><linearGradient id="r58" gradientUnits="userSpaceOnUse" x1="5.5" x2="164.5"><stop offset="0" stop-color="#00fffb"/><stop offset="0.371" stop-color="#00ffe3"/><stop offset="0.377" stop-color="#32ffe3"/><stop offset="0.384" stop-color="#45ffe2"/><stop offset="0.396" stop-color="#5dffe1"/><stop offset="0.421" stop-color="#7effdf"/><stop offset="0.453" stop-color="#9cffdc"/><stop offset="0.491" stop-color="#b9ffd8"/><stop offset="0.604" stop-color="#feffca"/><stop offset="0.673" stop-color="#ffe0a7"/><stop offset="0.742" stop-color="#ffc88b"/><stop offset="0.931" stop-color="#ff9b40"/><stop offset="0.975" stop-color="#ff9323"/><stop offset="0.981" stop-color="#ff921c"/><stop offset="0.994" stop-color="#ff8f00"/><stop offset="1" stop-color="#ff8e00"/></linearGradient><linearGradient id="r59" gradientUnits="userSpaceOnUse" x1="5.5" x2="166.5"><stop offset="0" stop-color="#00fffe"/><stop offset="0.36" stop-color="#00ffe8"/><stop offset="0.373" stop-color="#3affe7"/><stop offset="0.379" stop-color="#4affe6"/><stop offset="0.398" stop-color="#6affe5"/><stop offset="0.416" stop-color="#81ffe3"/><stop offset="0.447" stop-color="#9fffe0"/><stop offset="0.484" stop-color="#bcffdc"/><stop offset="0.59" stop-color="#feffcf"/><stop offset="0.658" stop-color="#ffe0ad"/><stop offset="0.733" stop-color="#ffc58d"/><stop offset="0.932" stop-color="#ff963f"/><stop offset="0.975" stop-color="#ff8e23"/><stop offset="0.981" stop-color="#ff8d1b"/><stop offset="0.994" stop-color="#ff8b00"/><stop offset="1" stop-color="#ff8a00"/></linearGradient><linearGradient id="r60" gradientUnits="userSpaceOnUse" x1="6.5" x2="168.5"><stop offset="0" stop-color="#00fdff"/><stop offset="0.352" stop-color="#00ffec"/><stop offset="0.358" stop-color="#2bffeb"/><stop offset="0.364" stop-color="#41ffeb"/><stop offset="0.377" stop-color="#5bffea"/><stop offset="0.401" stop-color="#7dffe8"/><stop offset="0.432" stop-color="#9cffe5"/><stop offset="0.469" stop-color="#baffe1"/><stop offset="0.574" stop-color="#feffd5"/><stop offset="0.648" stop-color="#ffddaf"/><stop offset="0.722" stop-color="#ffc390"/><stop offset="0.815" stop-color="#ffaa6e"/><stop offset="0.932" stop-color="#ff913f"/><stop offset="0.975" stop-color="#ff8a22"/><stop offset="0.981" stop-color="#ff891b"/><stop offset="0.994" stop-color="#ff8600"/><stop offset="1" stop-color="#ff8500"/></linearGradient><linearGradient id="r61" gradientUnits="userSpaceOnUse" x1="6.5" x2="170.5"><stop offset="0" stop-color="#00faff"/><stop offset="0.104" stop-color="#0ff"/><stop offset="0.348" stop-color="#00fff0"/><stop offset="0.354" stop-color="#34ffef"/><stop offset="0.36" stop-color="#47ffef"/><stop offset="0.372" stop-color="#60ffee"/><stop offset="0.396" stop-color="#81ffec"/><stop offset="0.427" stop-color="#a0ffe9"/><stop offset="0.463" stop-color="#beffe6"/><stop offset="0.561" stop-color="#feffdb"/><stop offset="0.634" stop-color="#ffdcb4"/><stop offset="0.713" stop-color="#ffc092"/><stop offset="0.811" stop-color="#ffa66e"/><stop offset="0.933" stop-color="#ff8d3e"/><stop offset="0.976" stop-color="#ff8522"/><stop offset="0.982" stop-color="#ff841b"/><stop offset="0.994" stop-color="#ff8200"/><stop offset="1" stop-color="#ff8100"/></linearGradient><linearGradient id="r62" gradientUnits="userSpaceOnUse" x1="6.5" x2="172.5"><stop offset="0" stop-color="#00f7ff"/><stop offset="0.169" stop-color="#0ff"/><stop offset="0.337" stop-color="#00fff4"/><stop offset="0.349" stop-color="#3cfff3"/><stop offset="0.355" stop-color="#4cfff3"/><stop offset="0.367" stop-color="#64fff2"/><stop offset="0.386" stop-color="#7dfff0"/><stop offset="0.416" stop-color="#9dffee"/><stop offset="0.452" stop-color="#bcffeb"/><stop offset="0.548" stop-color="#feffe0"/><stop offset="0.62" stop-color="#ffdbb8"/><stop offset="0.705" stop-color="#ffbd94"/><stop offset="0.807" stop-color="#ffa26f"/><stop offset="0.934" stop-color="#ff883e"/><stop offset="0.976" stop-color="#ff8022"/><stop offset="0.982" stop-color="#ff7f1a"/><stop offset="0.994" stop-color="#ff7d00"/><stop offset="1" stop-color="#ff7c00"/></linearGradient><linearGradient id="r63" gradientUnits="userSpaceOnUse" x1="7.5" x2="174.5"><stop offset="0" stop-color="#00f5ff"/><stop offset="0.222" stop-color="#0ff"/><stop offset="0.329" stop-color="#00fff8"/><stop offset="0.335" stop-color="#2dfff8"/><stop offset="0.341" stop-color="#43fff7"/><stop offset="0.353" stop-color="#5efff7"/><stop offset="0.377" stop-color="#81fff5"/><stop offset="0.437" stop-color="#bbfff0"/><stop offset="0.533" stop-color="#feffe6"/><stop offset="0.605" stop-color="#ffdbbd"/><stop offset="0.689" stop-color="#ffbc99"/><stop offset="0.796" stop-color="#ff9f72"/><stop offset="0.934" stop-color="#ff833d"/><stop offset="0.976" stop-color="#ff7c21"/><stop offset="0.982" stop-color="#ff7b1a"/><stop offset="0.994" stop-color="#ff7900"/><stop offset="1" stop-color="#ff7800"/></linearGradient><linearGradient id="r64" gradientUnits="userSpaceOnUse" x1="7.5" x2="176.5"><stop offset="0" stop-color="#00f2ff"/><stop offset="0.325" stop-color="#00fffc"/><stop offset="0.331" stop-color="#36fffc"/><stop offset="0.337" stop-color="#49fffc"/><stop offset="0.349" stop-color="#62fffb"/><stop offset="0.367" stop-color="#7dfffa"/><stop offset="0.391" stop-color="#98fff8"/><stop offset="0.426" stop-color="#b9fff5"/><stop offset="0.521" stop-color="#feffec"/><stop offset="0.592" stop-color="#ffdac2"/><stop offset="0.68" stop-color="#ffb99b"/><stop offset="0.793" stop-color="#ff9b73"/><stop offset="0.935" stop-color="#ff7e3c"/><stop offset="0.976" stop-color="#ff7721"/><stop offset="0.982" stop-color="#ff761a"/><stop offset="0.994" stop-color="#ff7400"/><stop offset="1" stop-color="#ff7300"/></linearGradient><linearGradient id="r65" gradientUnits="userSpaceOnUse" x1="8.5" x2="178.5"><stop offset="0" stop-color="#00efff"/><stop offset="0.312" stop-color="#00fdff"/><stop offset="0.324" stop-color="#3efeff"/><stop offset="0.329" stop-color="#4ffeff"/><stop offset="0.341" stop-color="#67ffff"/><stop offset="0.359" stop-color="#81fffe"/><stop offset="0.382" stop-color="#9cfffc"/><stop offset="0.418" stop-color="#bdfff9"/><stop offset="0.506" stop-color="#fefff1"/><stop offset="0.582" stop-color="#ffd7c4"/><stop offset="0.671" stop-color="#ffb69d"/><stop offset="0.788" stop-color="#ff9773"/><stop offset="0.935" stop-color="#ff7a3c"/><stop offset="0.976" stop-color="#ff7221"/><stop offset="0.982" stop-color="#ff711a"/><stop offset="0.994" stop-color="#ff6f00"/><stop offset="1" stop-color="#ff6e00"/></linearGradient><linearGradient id="r66" gradientUnits="userSpaceOnUse" x1="8.5" x2="180.5"><stop offset="0" stop-color="#00ecff"/><stop offset="0.308" stop-color="#00f9ff"/><stop offset="0.314" stop-color="#2ef9ff"/><stop offset="0.32" stop-color="#44f9ff"/><stop offset="0.331" stop-color="#5ffaff"/><stop offset="0.349" stop-color="#7bfbff"/><stop offset="0.372" stop-color="#98fdff"/><stop offset="0.407" stop-color="#bff"/><stop offset="0.494" stop-color="#fefff7"/><stop offset="0.57" stop-color="#ffd6c9"/><stop offset="0.663" stop-color="#ffb39f"/><stop offset="0.779" stop-color="#ff9476"/><stop offset="0.936" stop-color="#ff753b"/><stop offset="0.977" stop-color="#ff6e20"/><stop offset="0.983" stop-color="#ff6d19"/><stop offset="0.994" stop-color="#ff6b00"/><stop offset="1" stop-color="#ff6a00"/></linearGradient><linearGradient id="r67" gradientUnits="userSpaceOnUse" x1="8.5" x2="182.5"><stop offset="0" stop-color="#00e9ff"/><stop offset="0.305" stop-color="#00f5ff"/><stop offset="0.31" stop-color="#36f5ff"/><stop offset="0.322" stop-color="#56f5ff"/><stop offset="0.339" stop-color="#74f6ff"/><stop offset="0.362" stop-color="#92f8ff"/><stop offset="0.397" stop-color="#b6faff"/><stop offset="0.483" stop-color="#fefffd"/><stop offset="0.557" stop-color="#ffd5cd"/><stop offset="0.649" stop-color="#ffb2a3"/><stop offset="0.77" stop-color="#ff9178"/><stop offset="0.937" stop-color="#ff703b"/><stop offset="0.977" stop-color="#ff6920"/><stop offset="0.983" stop-color="#ff6819"/><stop offset="0.994" stop-color="#f60"/><stop offset="1" stop-color="#ff6500"/></linearGradient><linearGradient id="r68" gradientUnits="userSpaceOnUse" x1="9.5" x2="184.5"><stop offset="0" stop-color="#00e6ff"/><stop offset="0.291" stop-color="#00f0ff"/><stop offset="0.297" stop-color="#22f0ff"/><stop offset="0.303" stop-color="#3df1ff"/><stop offset="0.314" stop-color="#5af1ff"/><stop offset="0.331" stop-color="#76f2ff"/><stop offset="0.383" stop-color="#b1f5ff"/><stop offset="0.474" stop-color="#fffbff"/><stop offset="0.549" stop-color="#ffd1cf"/><stop offset="0.646" stop-color="#ffada3"/><stop offset="0.771" stop-color="#ff8c77"/><stop offset="0.937" stop-color="#ff6b3a"/><stop offset="0.977" stop-color="#ff6420"/><stop offset="0.983" stop-color="#ff6319"/><stop offset="0.994" stop-color="#ff6100"/><stop offset="1" stop-color="#ff5f00"/></linearGradient><linearGradient id="r69" gradientUnits="userSpaceOnUse" x1="9.5" x2="186.5"><stop offset="0" stop-color="#00e3ff"/><stop offset="0.288" stop-color="#00ecff"/><stop offset="0.294" stop-color="#2decff"/><stop offset="0.299" stop-color="#42edff"/><stop offset="0.311" stop-color="#5dedff"/><stop offset="0.328" stop-color="#78eeff"/><stop offset="0.379" stop-color="#b1f0ff"/><stop offset="0.469" stop-color="#fef6ff"/><stop offset="0.542" stop-color="#ffced0"/><stop offset="0.638" stop-color="#ffaaa5"/><stop offset="0.763" stop-color="#ff8979"/><stop offset="0.932" stop-color="#ff673c"/><stop offset="0.972" stop-color="#ff5f25"/><stop offset="0.983" stop-color="#ff5d19"/><stop offset="0.994" stop-color="#ff5b00"/><stop offset="1" stop-color="#ff5a00"/></linearGradient><linearGradient id="r70" gradientUnits="userSpaceOnUse" x1="9.5" x2="188.5"><stop offset="0" stop-color="#00e0ff"/><stop offset="0.279" stop-color="#00e8ff"/><stop offset="0.285" stop-color="#0ae8ff"/><stop offset="0.291" stop-color="#35e8ff"/><stop offset="0.296" stop-color="#47e8ff"/><stop offset="0.307" stop-color="#5fe9ff"/><stop offset="0.324" stop-color="#7aeaff"/><stop offset="0.38" stop-color="#b7ecff"/><stop offset="0.469" stop-color="#ffeffd"/><stop offset="0.542" stop-color="#ffc8cf"/><stop offset="0.637" stop-color="#ffa5a4"/><stop offset="0.76" stop-color="#ff8579"/><stop offset="0.933" stop-color="#ff613c"/><stop offset="0.972" stop-color="#ff5a24"/><stop offset="0.983" stop-color="#ff5819"/><stop offset="0.994" stop-color="#ff5600"/><stop offset="1" stop-color="#f50"/></linearGradient><linearGradient id="r71" gradientUnits="userSpaceOnUse" x1="10.5" x2="190.5"><stop offset="0" stop-color="#00deff"/><stop offset="0.272" stop-color="#00e4ff"/><stop offset="0.278" stop-color="#22e4ff"/><stop offset="0.283" stop-color="#3ce4ff"/><stop offset="0.289" stop-color="#4be4ff"/><stop offset="0.3" stop-color="#62e5ff"/><stop offset="0.317" stop-color="#7be5ff"/><stop offset="0.372" stop-color="#b7e7ff"/><stop offset="0.461" stop-color="#ffebfe"/><stop offset="0.533" stop-color="#ffc4d0"/><stop offset="0.633" stop-color="#ffa0a4"/><stop offset="0.756" stop-color="#ff817a"/><stop offset="0.933" stop-color="#ff5c3b"/><stop offset="0.972" stop-color="#ff5424"/><stop offset="0.983" stop-color="#ff5218"/><stop offset="0.994" stop-color="#ff5000"/><stop offset="1" stop-color="#ff4f00"/></linearGradient><linearGradient id="r72" gradientUnits="userSpaceOnUse" x1="10.5" x2="192.5"><stop offset="0" stop-color="#00dbff"/><stop offset="0.269" stop-color="#00e0ff"/><stop offset="0.275" stop-color="#2de0ff"/><stop offset="0.28" stop-color="#41e0ff"/><stop offset="0.291" stop-color="#5be1ff"/><stop offset="0.308" stop-color="#75e1ff"/><stop offset="0.33" stop-color="#91e2ff"/><stop offset="0.363" stop-color="#b2e3ff"/><stop offset="0.456" stop-color="#ffe6ff"/><stop offset="0.527" stop-color="#ffc1d2"/><stop offset="0.626" stop-color="#ff9da6"/><stop offset="0.747" stop-color="#ff7d7c"/><stop offset="0.934" stop-color="#ff563b"/><stop offset="0.973" stop-color="#ff4e24"/><stop offset="0.984" stop-color="#ff4c18"/><stop offset="0.995" stop-color="#ff4a00"/><stop offset="1" stop-color="#ff4800"/></linearGradient><linearGradient id="r73" gradientUnits="userSpaceOnUse" x1="11.5" x2="194.5"><stop offset="0" stop-color="#00d8ff"/><stop offset="0.257" stop-color="#00dcff"/><stop offset="0.262" stop-color="#0edcff"/><stop offset="0.268" stop-color="#35dcff"/><stop offset="0.273" stop-color="#46dcff"/><stop offset="0.284" stop-color="#5eddff"/><stop offset="0.301" stop-color="#7df"/><stop offset="0.355" stop-color="#b2deff"/><stop offset="0.448" stop-color="#fee1ff"/><stop offset="0.525" stop-color="#ffbbd0"/><stop offset="0.623" stop-color="#ff98a5"/><stop offset="0.743" stop-color="#ff797c"/><stop offset="0.869" stop-color="#ff5e54"/><stop offset="0.934" stop-color="#ff503a"/><stop offset="0.973" stop-color="#ff4824"/><stop offset="0.984" stop-color="#ff4518"/><stop offset="0.995" stop-color="#ff4300"/><stop offset="1" stop-color="#ff4200"/></linearGradient><linearGradient id="r74" gradientUnits="userSpaceOnUse" x1="11.5" x2="196.5"><stop offset="0" stop-color="#00d5ff"/><stop offset="0.254" stop-color="#00d8ff"/><stop offset="0.259" stop-color="#22d8ff"/><stop offset="0.265" stop-color="#3bd8ff"/><stop offset="0.27" stop-color="#4ad8ff"/><stop offset="0.281" stop-color="#60d8ff"/><stop offset="0.297" stop-color="#79d9ff"/><stop offset="0.324" stop-color="#98d9ff"/><stop offset="0.357" stop-color="#b7daff"/><stop offset="0.449" stop-color="#ffdbfd"/><stop offset="0.519" stop-color="#ffb7d2"/><stop offset="0.616" stop-color="#ff95a7"/><stop offset="0.865" stop-color="#ff5955"/><stop offset="0.935" stop-color="#ff493a"/><stop offset="0.973" stop-color="#ff4123"/><stop offset="0.984" stop-color="#ff3e18"/><stop offset="0.995" stop-color="#ff3b00"/><stop offset="1" stop-color="#ff3a00"/></linearGradient><linearGradient id="r75" gradientUnits="userSpaceOnUse" x1="12.5" x2="198.5"><stop offset="0" stop-color="#00d2ff"/><stop offset="0.247" stop-color="#00d4ff"/><stop offset="0.253" stop-color="#2dd4ff"/><stop offset="0.258" stop-color="#40d4ff"/><stop offset="0.269" stop-color="#59d4ff"/><stop offset="0.29" stop-color="#7ad5ff"/><stop offset="0.349" stop-color="#b7d6ff"/><stop offset="0.441" stop-color="#ffd7fe"/><stop offset="0.505" stop-color="#ffb6d6"/><stop offset="0.591" stop-color="#ff96af"/><stop offset="0.704" stop-color="#ff7787"/><stop offset="0.86" stop-color="#ff5456"/><stop offset="0.93" stop-color="#ff433c"/><stop offset="0.973" stop-color="#ff3823"/><stop offset="0.984" stop-color="#ff3518"/><stop offset="0.995" stop-color="#ff3200"/><stop offset="1" stop-color="#ff3000"/></linearGradient><linearGradient id="r76" gradientUnits="userSpaceOnUse" x1="12.5" x2="200.5"><stop offset="0" stop-color="#00cfff"/><stop offset="0.239" stop-color="#00d0ff"/><stop offset="0.245" stop-color="#10d0ff"/><stop offset="0.25" stop-color="#34d0ff"/><stop offset="0.255" stop-color="#45d0ff"/><stop offset="0.266" stop-color="#5cd0ff"/><stop offset="0.287" stop-color="#7cd1ff"/><stop offset="0.346" stop-color="#b7d1ff"/><stop offset="0.436" stop-color="#ffd2ff"/><stop offset="0.505" stop-color="#ffb0d5"/><stop offset="0.585" stop-color="#ff93b0"/><stop offset="0.931" stop-color="#ff3b3b"/><stop offset="0.973" stop-color="#ff2e23"/><stop offset="0.984" stop-color="#ff2a17"/><stop offset="0.995" stop-color="#ff2600"/><stop offset="1" stop-color="#ff2400"/></linearGradient><linearGradient id="r77" gradientUnits="userSpaceOnUse" x1="12.5" x2="202.5"><stop offset="0" stop-color="#0cf"/><stop offset="0.237" stop-color="#00cdff"/><stop offset="0.242" stop-color="#23cdff"/><stop offset="0.247" stop-color="#3acdff"/><stop offset="0.253" stop-color="#49cdff"/><stop offset="0.268" stop-color="#67cdff"/><stop offset="0.284" stop-color="#7dcdff"/><stop offset="0.347" stop-color="#bccdff"/><stop offset="0.437" stop-color="#ffcbfd"/><stop offset="0.5" stop-color="#ffacd6"/><stop offset="0.584" stop-color="#ff8eb0"/><stop offset="0.932" stop-color="#ff323b"/><stop offset="0.963" stop-color="#ff262a"/><stop offset="0.984" stop-color="#ff1a17"/><stop offset="0.995" stop-color="#ff1000"/><stop offset="1" stop-color="#f00"/></linearGradient><linearGradient id="r78" gradientUnits="userSpaceOnUse" x1="13.5" x2="200.5"><stop offset="0" stop-color="#00c9ff"/><stop offset="0.235" stop-color="#00c9ff"/><stop offset="0.241" stop-color="#2cc9ff"/><stop offset="0.246" stop-color="#3fc9ff"/><stop offset="0.257" stop-color="#57c9ff"/><stop offset="0.278" stop-color="#78c9ff"/><stop offset="0.305" stop-color="#96c8ff"/><stop offset="0.342" stop-color="#b8c8ff"/><stop offset="0.439" stop-color="#ffc7fe"/><stop offset="0.508" stop-color="#ffa6d4"/><stop offset="0.594" stop-color="#ff88af"/><stop offset="0.925" stop-color="#ff3045"/><stop offset="0.968" stop-color="#ff1c33"/><stop offset="0.979" stop-color="#ff142d"/><stop offset="0.989" stop-color="#ff0026"/><stop offset="1" stop-color="#ff001d"/></linearGradient><linearGradient id="r79" gradientUnits="userSpaceOnUse" x1="13.5" x2="196.5"><stop offset="0" stop-color="#00c7ff"/><stop offset="0.235" stop-color="#00c5ff"/><stop offset="0.24" stop-color="#12c5ff"/><stop offset="0.246" stop-color="#34c5ff"/><stop offset="0.251" stop-color="#44c5ff"/><stop offset="0.262" stop-color="#5ac5ff"/><stop offset="0.284" stop-color="#79c5ff"/><stop offset="0.344" stop-color="#b3c4ff"/><stop offset="0.448" stop-color="#ffc2ff"/><stop offset="0.519" stop-color="#ffa2d6"/><stop offset="0.607" stop-color="#ff85b1"/><stop offset="0.923" stop-color="#ff3050"/><stop offset="0.967" stop-color="#ff1b41"/><stop offset="0.978" stop-color="#ff113c"/><stop offset="0.984" stop-color="#ff043a"/><stop offset="0.989" stop-color="#ff0038"/><stop offset="1" stop-color="#f03"/></linearGradient><linearGradient id="r80" gradientUnits="userSpaceOnUse" x1="14.5" x2="192.5"><stop offset="0" stop-color="#00c4ff"/><stop offset="0.236" stop-color="#00c1ff"/><stop offset="0.242" stop-color="#23c1ff"/><stop offset="0.247" stop-color="#39c1ff"/><stop offset="0.253" stop-color="#48c1ff"/><stop offset="0.27" stop-color="#65c1ff"/><stop offset="0.287" stop-color="#7ac1ff"/><stop offset="0.348" stop-color="#b3c0ff"/><stop offset="0.455" stop-color="#febdff"/><stop offset="0.528" stop-color="#ff9ed7"/><stop offset="0.618" stop-color="#ff81b2"/><stop offset="0.916" stop-color="#ff315b"/><stop offset="0.966" stop-color="#ff1a4c"/><stop offset="0.978" stop-color="#ff0e48"/><stop offset="0.983" stop-color="#ff0046"/><stop offset="1" stop-color="#ff0040"/></linearGradient><linearGradient id="r81" gradientUnits="userSpaceOnUse" x1="14.5" x2="187.5"><stop offset="0" stop-color="#00c1ff"/><stop offset="0.243" stop-color="#00bdff"/><stop offset="0.249" stop-color="#2cbdff"/><stop offset="0.254" stop-color="#3ebdff"/><stop offset="0.266" stop-color="#56bdff"/><stop offset="0.289" stop-color="#75bdff"/><stop offset="0.353" stop-color="#afbbff"/><stop offset="0.468" stop-color="#feb8ff"/><stop offset="0.549" stop-color="#ff98d5"/><stop offset="0.636" stop-color="#ff7db4"/><stop offset="0.919" stop-color="#ff3164"/><stop offset="0.96" stop-color="#ff2059"/><stop offset="0.977" stop-color="#ff1354"/><stop offset="0.988" stop-color="#ff0050"/><stop offset="1" stop-color="#ff004d"/></linearGradient><linearGradient id="r82" gradientUnits="userSpaceOnUse" x1="15.5" x2="183.5"><stop offset="0" stop-color="#00beff"/><stop offset="0.238" stop-color="#00baff"/><stop offset="0.244" stop-color="#14baff"/><stop offset="0.25" stop-color="#33baff"/><stop offset="0.256" stop-color="#43b9ff"/><stop offset="0.274" stop-color="#61b9ff"/><stop offset="0.298" stop-color="#7db9ff"/><stop offset="0.369" stop-color="#b8b7ff"/><stop offset="0.482" stop-color="#ffb2fe"/><stop offset="0.554" stop-color="#ff96d9"/><stop offset="0.643" stop-color="#ff7ab7"/><stop offset="0.911" stop-color="#ff336d"/><stop offset="0.964" stop-color="#ff1b60"/><stop offset="0.976" stop-color="#ff0f5d"/><stop offset="0.982" stop-color="#ff005b"/><stop offset="1" stop-color="#ff0056"/></linearGradient><linearGradient id="r83" gradientUnits="userSpaceOnUse" x1="15.5" x2="179.5"><stop offset="0" stop-color="#0bf"/><stop offset="0.244" stop-color="#00b6ff"/><stop offset="0.25" stop-color="#23b6ff"/><stop offset="0.256" stop-color="#39b6ff"/><stop offset="0.262" stop-color="#47b6ff"/><stop offset="0.28" stop-color="#63b5ff"/><stop offset="0.299" stop-color="#78b5ff"/><stop offset="0.372" stop-color="#b4b2ff"/><stop offset="0.494" stop-color="#ffadff"/><stop offset="0.567" stop-color="#ff91da"/><stop offset="0.652" stop-color="#ff77ba"/><stop offset="0.909" stop-color="#ff3375"/><stop offset="0.963" stop-color="#ff1968"/><stop offset="0.97" stop-color="#ff1466"/><stop offset="0.982" stop-color="#ff0064"/><stop offset="1" stop-color="#ff005f"/></linearGradient><linearGradient id="r84" gradientUnits="userSpaceOnUse" x1="16.5" x2="174.5"><stop offset="0" stop-color="#00b8ff"/><stop offset="0.247" stop-color="#00b2ff"/><stop offset="0.253" stop-color="#2cb2ff"/><stop offset="0.259" stop-color="#3eb2ff"/><stop offset="0.278" stop-color="#5db1ff"/><stop offset="0.304" stop-color="#7ab1ff"/><stop offset="0.38" stop-color="#b4aeff"/><stop offset="0.506" stop-color="#fea8ff"/><stop offset="0.582" stop-color="#ff8ddc"/><stop offset="0.665" stop-color="#ff75be"/><stop offset="0.911" stop-color="#ff337d"/><stop offset="0.962" stop-color="#ff1c71"/><stop offset="0.975" stop-color="#ff116e"/><stop offset="0.981" stop-color="#ff006d"/><stop offset="1" stop-color="#ff0069"/></linearGradient><linearGradient id="r85" gradientUnits="userSpaceOnUse" x1="17.5" x2="170.5"><stop offset="0" stop-color="#00b5ff"/><stop offset="0.242" stop-color="#00afff"/><stop offset="0.248" stop-color="#15afff"/><stop offset="0.255" stop-color="#33aeff"/><stop offset="0.261" stop-color="#42aeff"/><stop offset="0.281" stop-color="#60adff"/><stop offset="0.307" stop-color="#7badff"/><stop offset="0.386" stop-color="#b4aaff"/><stop offset="0.516" stop-color="#fda3ff"/><stop offset="0.595" stop-color="#f8d"/><stop offset="0.68" stop-color="#ff70bf"/><stop offset="0.908" stop-color="#ff3384"/><stop offset="0.961" stop-color="#ff1b79"/><stop offset="0.974" stop-color="#ff0d76"/><stop offset="0.98" stop-color="#ff0074"/><stop offset="1" stop-color="#ff0070"/></linearGradient><linearGradient id="r86" gradientUnits="userSpaceOnUse" x1="17.5" x2="166.5"><stop offset="0" stop-color="#00b2ff"/><stop offset="0.248" stop-color="#00abff"/><stop offset="0.255" stop-color="#23abff"/><stop offset="0.262" stop-color="#38aaff"/><stop offset="0.268" stop-color="#46aaff"/><stop offset="0.289" stop-color="#62aaff"/><stop offset="0.315" stop-color="#7ca9ff"/><stop offset="0.403" stop-color="#b8a5ff"/><stop offset="0.537" stop-color="#ff9cfe"/><stop offset="0.604" stop-color="#ff86e0"/><stop offset="0.685" stop-color="#ff6fc4"/><stop offset="0.899" stop-color="#ff358d"/><stop offset="0.953" stop-color="#ff1e82"/><stop offset="0.966" stop-color="#ff137f"/><stop offset="0.973" stop-color="#ff027d"/><stop offset="1" stop-color="#ff0078"/></linearGradient><linearGradient id="r87" gradientUnits="userSpaceOnUse" x1="18.5" x2="161.5"><stop offset="0" stop-color="#00aeff"/><stop offset="0.252" stop-color="#00a7ff"/><stop offset="0.259" stop-color="#2ca7ff"/><stop offset="0.266" stop-color="#3da7ff"/><stop offset="0.287" stop-color="#5ca6ff"/><stop offset="0.315" stop-color="#77a5ff"/><stop offset="0.357" stop-color="#97a3ff"/><stop offset="0.406" stop-color="#b4a1ff"/><stop offset="0.552" stop-color="#ff97ff"/><stop offset="0.622" stop-color="#ff81e1"/><stop offset="0.699" stop-color="#ff6bc8"/><stop offset="0.902" stop-color="#ff3595"/><stop offset="0.958" stop-color="#ff1c89"/><stop offset="0.972" stop-color="#ff0f86"/><stop offset="0.979" stop-color="#ff0085"/><stop offset="1" stop-color="#ff0080"/></linearGradient><linearGradient id="r88" gradientUnits="userSpaceOnUse" x1="18.5" x2="157.5"><stop offset="0" stop-color="#00abff"/><stop offset="0.252" stop-color="#00a4ff"/><stop offset="0.266" stop-color="#32a3ff"/><stop offset="0.273" stop-color="#41a3ff"/><stop offset="0.295" stop-color="#5ea2ff"/><stop offset="0.324" stop-color="#79a1ff"/><stop offset="0.417" stop-color="#b59cff"/><stop offset="0.568" stop-color="#fe92ff"/><stop offset="0.712" stop-color="#ff68cb"/><stop offset="0.899" stop-color="#ff359c"/><stop offset="0.957" stop-color="#ff1b90"/><stop offset="0.978" stop-color="#ff008c"/><stop offset="1" stop-color="#f08"/></linearGradient><linearGradient id="r89" gradientUnits="userSpaceOnUse" x1="19.5" x2="153.5"><stop offset="0" stop-color="#00a8ff"/><stop offset="0.254" stop-color="#00a0ff"/><stop offset="0.261" stop-color="#239fff"/><stop offset="0.269" stop-color="#379fff"/><stop offset="0.276" stop-color="#459fff"/><stop offset="0.299" stop-color="#609eff"/><stop offset="0.328" stop-color="#7a9cff"/><stop offset="0.425" stop-color="#b597ff"/><stop offset="0.582" stop-color="#fd8cff"/><stop offset="0.724" stop-color="#ff64ce"/><stop offset="0.896" stop-color="#ff35a4"/><stop offset="0.948" stop-color="#ff1e99"/><stop offset="0.963" stop-color="#ff1196"/><stop offset="0.97" stop-color="#ff0095"/><stop offset="1" stop-color="#ff008f"/></linearGradient><linearGradient id="r90" gradientUnits="userSpaceOnUse" x1="20.5" x2="148.5"><stop offset="0" stop-color="#00a5ff"/><stop offset="0.258" stop-color="#009cff"/><stop offset="0.266" stop-color="#2b9cff"/><stop offset="0.273" stop-color="#3c9bff"/><stop offset="0.297" stop-color="#5a9aff"/><stop offset="0.328" stop-color="#7599ff"/><stop offset="0.375" stop-color="#9496ff"/><stop offset="0.438" stop-color="#b593ff"/><stop offset="0.609" stop-color="#ff85fe"/><stop offset="0.734" stop-color="#ff62d4"/><stop offset="0.898" stop-color="#ff35ac"/><stop offset="0.953" stop-color="#ff1ca0"/><stop offset="0.961" stop-color="#ff169f"/><stop offset="0.977" stop-color="#ff009c"/><stop offset="1" stop-color="#ff0097"/></linearGradient><linearGradient id="r91" gradientUnits="userSpaceOnUse" x1="20.5" x2="144.5"><stop offset="0" stop-color="#00a2ff"/><stop offset="0.258" stop-color="#0098ff"/><stop offset="0.274" stop-color="#3298ff"/><stop offset="0.282" stop-color="#4097ff"/><stop offset="0.306" stop-color="#5d96ff"/><stop offset="0.339" stop-color="#7794ff"/><stop offset="0.444" stop-color="#b18eff"/><stop offset="0.629" stop-color="#ff7fff"/><stop offset="0.75" stop-color="#ff5ed7"/><stop offset="0.895" stop-color="#ff35b4"/><stop offset="0.952" stop-color="#ff1ba8"/><stop offset="0.96" stop-color="#ff13a6"/><stop offset="0.968" stop-color="#ff00a5"/><stop offset="1" stop-color="#ff009f"/></linearGradient><linearGradient id="r92" gradientUnits="userSpaceOnUse" x1="21.5" x2="140.5"><stop offset="0" stop-color="#009eff"/><stop offset="0.261" stop-color="#0094ff"/><stop offset="0.269" stop-color="#2394ff"/><stop offset="0.277" stop-color="#3794ff"/><stop offset="0.286" stop-color="#4493ff"/><stop offset="0.311" stop-color="#5f92ff"/><stop offset="0.345" stop-color="#7890ff"/><stop offset="0.454" stop-color="#b189ff"/><stop offset="0.647" stop-color="#fe78ff"/><stop offset="0.765" stop-color="#ff59da"/><stop offset="0.891" stop-color="#ff35bc"/><stop offset="0.941" stop-color="#ff1eb1"/><stop offset="0.958" stop-color="#ff0eae"/><stop offset="0.966" stop-color="#ff00ad"/><stop offset="1" stop-color="#ff00a6"/></linearGradient><linearGradient id="r93" gradientUnits="userSpaceOnUse" x1="22.5" x2="136.5"><stop offset="0" stop-color="#009bff"/><stop offset="0.263" stop-color="#0090ff"/><stop offset="0.272" stop-color="#2b90ff"/><stop offset="0.281" stop-color="#3b8fff"/><stop offset="0.307" stop-color="#598eff"/><stop offset="0.351" stop-color="#798cff"/><stop offset="0.465" stop-color="#b284ff"/><stop offset="0.667" stop-color="#fd71ff"/><stop offset="0.789" stop-color="#ff51db"/><stop offset="0.904" stop-color="#ff2ec1"/><stop offset="0.947" stop-color="#ff15b8"/><stop offset="0.956" stop-color="#ff00b6"/><stop offset="1" stop-color="#ff00ae"/></linearGradient><linearGradient id="r94" gradientUnits="userSpaceOnUse" x1="22.5" x2="131.5"><stop offset="0" stop-color="#0098ff"/><stop offset="0.266" stop-color="#008dff"/><stop offset="0.284" stop-color="#318cff"/><stop offset="0.294" stop-color="#3f8bff"/><stop offset="0.321" stop-color="#5b8aff"/><stop offset="0.367" stop-color="#7a87ff"/><stop offset="0.495" stop-color="#b57fff"/><stop offset="0.706" stop-color="#ff69fe"/><stop offset="0.89" stop-color="#ff35cd"/><stop offset="0.945" stop-color="#ff1ac2"/><stop offset="0.954" stop-color="#ff11c0"/><stop offset="0.963" stop-color="#ff00be"/><stop offset="1" stop-color="#ff00b7"/></linearGradient><linearGradient id="r95" gradientUnits="userSpaceOnUse" x1="23.5" x2="127.5"><stop offset="0" stop-color="#0094ff"/><stop offset="0.269" stop-color="#0089ff"/><stop offset="0.279" stop-color="#2388ff"/><stop offset="0.288" stop-color="#3688ff"/><stop offset="0.308" stop-color="#4d87ff"/><stop offset="0.337" stop-color="#6485ff"/><stop offset="0.423" stop-color="#9380ff"/><stop offset="0.548" stop-color="#c376ff"/><stop offset="0.731" stop-color="#ff61ff"/><stop offset="0.904" stop-color="#ff2dd3"/><stop offset="0.942" stop-color="#ff17ca"/><stop offset="0.962" stop-color="#ff00c7"/><stop offset="1" stop-color="#ff00bf"/></linearGradient><linearGradient id="r96" gradientUnits="userSpaceOnUse" x1="24.5" x2="123.5"><stop offset="0" stop-color="#0090ff"/><stop offset="0.273" stop-color="#0084ff"/><stop offset="0.283" stop-color="#2b84ff"/><stop offset="0.303" stop-color="#4683ff"/><stop offset="0.323" stop-color="#5882ff"/><stop offset="0.394" stop-color="#817dff"/><stop offset="0.515" stop-color="#b274ff"/><stop offset="0.758" stop-color="#fe58ff"/><stop offset="0.848" stop-color="#ff3fe8"/><stop offset="0.909" stop-color="#ff28da"/><stop offset="0.939" stop-color="#ff14d4"/><stop offset="0.949" stop-color="#ff00d1"/><stop offset="1" stop-color="#ff00c8"/></linearGradient><linearGradient id="r97" gradientUnits="userSpaceOnUse" x1="24.5" x2="118.5"><stop offset="0" stop-color="#008dff"/><stop offset="0.277" stop-color="#0081ff"/><stop offset="0.298" stop-color="#3180ff"/><stop offset="0.33" stop-color="#527eff"/><stop offset="0.394" stop-color="#787aff"/><stop offset="0.5" stop-color="#a472ff"/><stop offset="0.67" stop-color="#d962ff"/><stop offset="0.798" stop-color="#fd4eff"/><stop offset="0.915" stop-color="#ff27e4"/><stop offset="0.936" stop-color="#ff1adf"/><stop offset="0.957" stop-color="#ff00db"/><stop offset="1" stop-color="#ff00d2"/></linearGradient><linearGradient id="r98" gradientUnits="userSpaceOnUse" x1="25.5" x2="114.5"><stop offset="0" stop-color="#0089ff"/><stop offset="0.281" stop-color="#007cff"/><stop offset="0.292" stop-color="#247cff"/><stop offset="0.303" stop-color="#367bff"/><stop offset="0.326" stop-color="#4c7aff"/><stop offset="0.393" stop-color="#7476ff"/><stop offset="0.483" stop-color="#986fff"/><stop offset="0.697" stop-color="#d95aff"/><stop offset="0.843" stop-color="#ff40ff"/><stop offset="0.921" stop-color="#ff1fec"/><stop offset="0.933" stop-color="#ff16e9"/><stop offset="0.944" stop-color="#ff00e7"/><stop offset="1" stop-color="#ff00dc"/></linearGradient><linearGradient id="r99" gradientUnits="userSpaceOnUse" x1="26.5" x2="110.5"><stop offset="0" stop-color="#0085ff"/><stop offset="0.286" stop-color="#0078ff"/><stop offset="0.298" stop-color="#2b77ff"/><stop offset="0.321" stop-color="#4576ff"/><stop offset="0.381" stop-color="#6a72ff"/><stop offset="0.464" stop-color="#8d6cff"/><stop offset="0.655" stop-color="#c65bff"/><stop offset="0.798" stop-color="#eb45ff"/><stop offset="0.893" stop-color="#ff2afc"/><stop offset="0.917" stop-color="#ff1df7"/><stop offset="0.94" stop-color="#ff00f2"/><stop offset="1" stop-color="#ff00e6"/></linearGradient><linearGradient id="r100" gradientUnits="userSpaceOnUse" x1="27.5" x2="105.5"><stop offset="0" stop-color="#0081ff"/><stop offset="0.282" stop-color="#0074ff"/><stop offset="0.308" stop-color="#3172ff"/><stop offset="0.333" stop-color="#4871ff"/><stop offset="0.385" stop-color="#666eff"/><stop offset="0.462" stop-color="#8568ff"/><stop offset="0.667" stop-color="#c056ff"/><stop offset="0.808" stop-color="#e141ff"/><stop offset="0.872" stop-color="#f031ff"/><stop offset="0.91" stop-color="#f822ff"/><stop offset="0.923" stop-color="#fb19ff"/><stop offset="0.936" stop-color="#fe00ff"/><stop offset="1" stop-color="#ff00f3"/></linearGradient><linearGradient id="r101" gradientUnits="userSpaceOnUse" x1="28.5" x2="101.5"><stop offset="0" stop-color="#007cff"/><stop offset="0.288" stop-color="#006fff"/><stop offset="0.301" stop-color="#246eff"/><stop offset="0.329" stop-color="#426dff"/><stop offset="0.37" stop-color="#5b6aff"/><stop offset="0.438" stop-color="#7866ff"/><stop offset="0.575" stop-color="#a15bff"/><stop offset="0.781" stop-color="#d241ff"/><stop offset="0.849" stop-color="#e132ff"/><stop offset="0.89" stop-color="#ea25ff"/><stop offset="0.918" stop-color="#ef13ff"/><stop offset="0.932" stop-color="#f200ff"/><stop offset="1" stop-color="#ff00fe"/></linearGradient><linearGradient id="r102" gradientUnits="userSpaceOnUse" x1="29.5" x2="97.5"><stop offset="0" stop-color="#0078ff"/><stop offset="0.294" stop-color="#006aff"/><stop offset="0.309" stop-color="#2b69ff"/><stop offset="0.324" stop-color="#3a68ff"/><stop offset="0.368" stop-color="#5666ff"/><stop offset="0.441" stop-color="#7461ff"/><stop offset="0.574" stop-color="#9a56ff"/><stop offset="0.779" stop-color="#c93cff"/><stop offset="0.882" stop-color="#de21ff"/><stop offset="0.897" stop-color="#e01aff"/><stop offset="0.912" stop-color="#e30aff"/><stop offset="0.926" stop-color="#e600ff"/><stop offset="1" stop-color="#f400ff"/></linearGradient><linearGradient id="r103" gradientUnits="userSpaceOnUse" x1="29.5" x2="92.5"><stop offset="0" stop-color="#0074ff"/><stop offset="0.302" stop-color="#06f"/><stop offset="0.333" stop-color="#3064ff"/><stop offset="0.349" stop-color="#3d63ff"/><stop offset="0.397" stop-color="#5860ff"/><stop offset="0.46" stop-color="#705cff"/><stop offset="0.587" stop-color="#9351ff"/><stop offset="0.778" stop-color="#bd3aff"/><stop offset="0.841" stop-color="#c92eff"/><stop offset="0.889" stop-color="#d21eff"/><stop offset="0.905" stop-color="#d514ff"/><stop offset="0.921" stop-color="#d800ff"/><stop offset="1" stop-color="#e600ff"/></linearGradient><linearGradient id="r104" gradientUnits="userSpaceOnUse" x1="30.5" x2="88.5"><stop offset="0" stop-color="#006fff"/><stop offset="0.31" stop-color="#0060ff"/><stop offset="0.328" stop-color="#245fff"/><stop offset="0.345" stop-color="#355eff"/><stop offset="0.397" stop-color="#525bff"/><stop offset="0.466" stop-color="#6c56ff"/><stop offset="0.586" stop-color="#8c4dff"/><stop offset="0.759" stop-color="#b038ff"/><stop offset="0.862" stop-color="#c321ff"/><stop offset="0.879" stop-color="#c61aff"/><stop offset="0.914" stop-color="#c0f"/><stop offset="1" stop-color="#da00ff"/></linearGradient><linearGradient id="r105" gradientUnits="userSpaceOnUse" x1="31.5" x2="84.5"><stop offset="0" stop-color="#006aff"/><stop offset="0.321" stop-color="#005bff"/><stop offset="0.34" stop-color="#2b59ff"/><stop offset="0.358" stop-color="#3958ff"/><stop offset="0.396" stop-color="#4d56ff"/><stop offset="0.472" stop-color="#6751ff"/><stop offset="0.604" stop-color="#8946ff"/><stop offset="0.792" stop-color="#ad2dff"/><stop offset="0.868" stop-color="#b915ff"/><stop offset="0.887" stop-color="#bd00ff"/><stop offset="1" stop-color="#ce00ff"/></linearGradient><linearGradient id="r106" gradientUnits="userSpaceOnUse" x1="33.5" x2="80.5"><stop offset="0" stop-color="#0063ff"/><stop offset="0.298" stop-color="#0056ff"/><stop offset="0.34" stop-color="#3053ff"/><stop offset="0.362" stop-color="#3d52ff"/><stop offset="0.468" stop-color="#634bff"/><stop offset="0.596" stop-color="#8140ff"/><stop offset="0.766" stop-color="#a02aff"/><stop offset="0.83" stop-color="#aa1aff"/><stop offset="0.872" stop-color="#b000ff"/><stop offset="1" stop-color="#c300ff"/></linearGradient><linearGradient id="r107" gradientUnits="userSpaceOnUse" x1="34.5" x2="75.5"><stop offset="0" stop-color="#005dff"/><stop offset="0.317" stop-color="#004fff"/><stop offset="0.341" stop-color="#244eff"/><stop offset="0.366" stop-color="#354cff"/><stop offset="0.463" stop-color="#5846ff"/><stop offset="0.585" stop-color="#743cff"/><stop offset="0.756" stop-color="#9228ff"/><stop offset="0.829" stop-color="#9c16ff"/><stop offset="0.854" stop-color="#a000ff"/><stop offset="1" stop-color="#b300ff"/></linearGradient><linearGradient id="r108" gradientUnits="userSpaceOnUse" x1="35.5" x2="71.5"><stop offset="0" stop-color="#0057ff"/><stop offset="0.306" stop-color="#0049ff"/><stop offset="0.333" stop-color="#0448ff"/><stop offset="0.361" stop-color="#2a46ff"/><stop offset="0.417" stop-color="#4343ff"/><stop offset="0.472" stop-color="#533fff"/><stop offset="0.583" stop-color="#6c36ff"/><stop offset="0.722" stop-color="#8326ff"/><stop offset="0.778" stop-color="#8b1bff"/><stop offset="0.806" stop-color="#8e11ff"/><stop offset="0.833" stop-color="#9200ff"/><stop offset="1" stop-color="#a700ff"/></linearGradient><linearGradient id="r109" gradientUnits="userSpaceOnUse" x1="37.5" x2="67.5"><stop offset="0" stop-color="#004fff"/><stop offset="0.3" stop-color="#0041ff"/><stop offset="0.333" stop-color="#1b3fff"/><stop offset="0.367" stop-color="#303dff"/><stop offset="0.467" stop-color="#4e37ff"/><stop offset="0.7" stop-color="#761eff"/><stop offset="0.8" stop-color="#8300ff"/><stop offset="1" stop-color="#9a00ff"/></linearGradient><linearGradient id="r110" gradientUnits="userSpaceOnUse" x1="38.5" x2="62.5"><stop offset="0" stop-color="#0046ff"/><stop offset="0.333" stop-color="#0037ff"/><stop offset="0.375" stop-color="#2435ff"/><stop offset="0.417" stop-color="#3432ff"/><stop offset="0.5" stop-color="#492dff"/><stop offset="0.667" stop-color="#631bff"/><stop offset="0.708" stop-color="#6912ff"/><stop offset="0.75" stop-color="#6e00ff"/><stop offset="1" stop-color="#80f"/></linearGradient><linearGradient id="r111" gradientUnits="userSpaceOnUse" x1="41.5" x2="58.5"><stop offset="0" stop-color="#0038ff"/><stop offset="0.235" stop-color="#002eff"/><stop offset="0.294" stop-color="#0a2bff"/><stop offset="0.353" stop-color="#2a27ff"/><stop offset="0.471" stop-color="#431eff"/><stop offset="0.529" stop-color="#4b17ff"/><stop offset="0.647" stop-color="#5900ff"/><stop offset="1" stop-color="#7800ff"/></linearGradient><linearGradient id="r112" gradientUnits="userSpaceOnUse" x1="43.5" x2="54.5"><stop offset="0" stop-color="#0025ff"/><stop offset="0.182" stop-color="#001bff"/><stop offset="0.273" stop-color="#1b13ff"/><stop offset="0.364" stop-color="#2f00ff"/><stop offset="0.636" stop-color="#4d00ff"/><stop offset="1" stop-color="#60f"/></linearGradient><linearGradient id="r113" gradientUnits="userSpaceOnUse" x1="45.5" x2="49.5"><stop offset="0" stop-color="#00f"/><stop offset="0.25" stop-color="#2400ff"/><stop offset="0.5" stop-color="#3400ff"/><stop offset="1" stop-color="#4800ff"/></linearGradient></defs><g clip-path="url(#loc)"><rect x="13" y="18" width="20" height="2.6" fill="url(#r0)"/><rect x="11" y="20" width="27" height="2.6" fill="url(#r1)"/><rect x="9" y="22" width="33" height="2.6" fill="url(#r2)"/><rect x="7" y="24" width="38" height="2.6" fill="url(#r3)"/><rect x="6" y="26" width="43" height="2.6" fill="url(#r4)"/><rect x="5" y="28" width="47" height="2.6" fill="url(#r5)"/><rect x="4" y="30" width="51" height="2.6" fill="url(#r6)"/><rect x="3" y="32" width="55" height="2.6" fill="url(#r7)"/><rect x="3" y="34" width="58" height="2.6" fill="url(#r8)"/><rect x="2" y="36" width="61" height="2.6" fill="url(#r9)"/><rect x="2" y="38" width="64" height="2.6" fill="url(#r10)"/><rect x="1" y="40" width="67" height="2.6" fill="url(#r11)"/><rect x="1" y="42" width="70" height="2.6" fill="url(#r12)"/><rect x="0" y="44" width="73" height="2.6" fill="url(#r13)"/><rect x="0" y="46" width="76" height="2.6" fill="url(#r14)"/><rect x="0" y="48" width="78" height="2.6" fill="url(#r15)"/><rect x="0" y="50" width="80" height="2.6" fill="url(#r16)"/><rect x="-1" y="52" width="83" height="2.6" fill="url(#r17)"/><rect x="-1" y="54" width="86" height="2.6" fill="url(#r18)"/><rect x="-1" y="56" width="88" height="2.6" fill="url(#r19)"/><rect x="-1" y="58" width="90" height="2.6" fill="url(#r20)"/><rect x="-1" y="60" width="92" height="2.6" fill="url(#r21)"/><rect x="-1" y="62" width="94" height="2.6" fill="url(#r22)"/><rect x="-1" y="64" width="96" height="2.6" fill="url(#r23)"/><rect x="-1" y="66" width="98" height="2.6" fill="url(#r24)"/><rect x="-1" y="68" width="100" height="2.6" fill="url(#r25)"/><rect x="-1" y="70" width="103" height="2.6" fill="url(#r26)"/><rect x="-1" y="72" width="105" height="2.6" fill="url(#r27)"/><rect x="-1" y="74" width="107" height="2.6" fill="url(#r28)"/><rect x="-1" y="76" width="109" height="2.6" fill="url(#r29)"/><rect x="-1" y="78" width="111" height="2.6" fill="url(#r30)"/><rect x="-1" y="80" width="113" height="2.6" fill="url(#r31)"/><rect x="-1" y="82" width="115" height="2.6" fill="url(#r32)"/><rect x="-1" y="84" width="117" height="2.6" fill="url(#r33)"/><rect x="-1" y="86" width="119" height="2.6" fill="url(#r34)"/><rect x="-1" y="88" width="121" height="2.6" fill="url(#r35)"/><rect x="-1" y="90" width="123" height="2.6" fill="url(#r36)"/><rect x="-1" y="92" width="125" height="2.6" fill="url(#r37)"/><rect x="-1" y="94" width="127" height="2.6" fill="url(#r38)"/><rect x="0" y="96" width="128" height="2.6" fill="url(#r39)"/><rect x="0" y="98" width="130" height="2.6" fill="url(#r40)"/><rect x="0" y="100" width="132" height="2.6" fill="url(#r41)"/><rect x="0" y="102" width="134" height="2.6" fill="url(#r42)"/><rect x="0" y="104" width="136" height="2.6" fill="url(#r43)"/><rect x="0" y="106" width="138" height="2.6" fill="url(#r44)"/><rect x="1" y="108" width="139" height="2.6" fill="url(#r45)"/><rect x="1" y="110" width="141" height="2.6" fill="url(#r46)"/><rect x="1" y="112" width="143" height="2.6" fill="url(#r47)"/><rect x="1" y="114" width="145" height="2.6" fill="url(#r48)"/><rect x="2" y="116" width="146" height="2.6" fill="url(#r49)"/><rect x="2" y="118" width="148" height="2.6" fill="url(#r50)"/><rect x="2" y="120" width="150" height="2.6" fill="url(#r51)"/><rect x="2" y="122" width="152" height="2.6" fill="url(#r52)"/><rect x="3" y="124" width="153" height="2.6" fill="url(#r53)"/><rect x="3" y="126" width="155" height="2.6" fill="url(#r54)"/><rect x="3" y="128" width="157" height="2.6" fill="url(#r55)"/><rect x="4" y="130" width="158" height="2.6" fill="url(#r56)"/><rect x="4" y="132" width="160" height="2.6" fill="url(#r57)"/><rect x="4" y="134" width="162" height="2.6" fill="url(#r58)"/><rect x="4" y="136" width="164" height="2.6" fill="url(#r59)"/><rect x="5" y="138" width="165" height="2.6" fill="url(#r60)"/><rect x="5" y="140" width="167" height="2.6" fill="url(#r61)"/><rect x="5" y="142" width="169" height="2.6" fill="url(#r62)"/><rect x="6" y="144" width="170" height="2.6" fill="url(#r63)"/><rect x="6" y="146" width="172" height="2.6" fill="url(#r64)"/><rect x="7" y="148" width="173" height="2.6" fill="url(#r65)"/><rect x="7" y="150" width="175" height="2.6" fill="url(#r66)"/><rect x="7" y="152" width="177" height="2.6" fill="url(#r67)"/><rect x="8" y="154" width="178" height="2.6" fill="url(#r68)"/><rect x="8" y="156" width="180" height="2.6" fill="url(#r69)"/><rect x="8" y="158" width="182" height="2.6" fill="url(#r70)"/><rect x="9" y="160" width="183" height="2.6" fill="url(#r71)"/><rect x="9" y="162" width="185" height="2.6" fill="url(#r72)"/><rect x="10" y="164" width="186" height="2.6" fill="url(#r73)"/><rect x="10" y="166" width="188" height="2.6" fill="url(#r74)"/><rect x="11" y="168" width="189" height="2.6" fill="url(#r75)"/><rect x="11" y="170" width="191" height="2.6" fill="url(#r76)"/><rect x="11" y="172" width="193" height="2.6" fill="url(#r77)"/><rect x="12" y="174" width="190" height="2.6" fill="url(#r78)"/><rect x="12" y="176" width="186" height="2.6" fill="url(#r79)"/><rect x="13" y="178" width="181" height="2.6" fill="url(#r80)"/><rect x="13" y="180" width="176" height="2.6" fill="url(#r81)"/><rect x="14" y="182" width="171" height="2.6" fill="url(#r82)"/><rect x="14" y="184" width="167" height="2.6" fill="url(#r83)"/><rect x="15" y="186" width="161" height="2.6" fill="url(#r84)"/><rect x="16" y="188" width="156" height="2.6" fill="url(#r85)"/><rect x="16" y="190" width="152" height="2.6" fill="url(#r86)"/><rect x="17" y="192" width="146" height="2.6" fill="url(#r87)"/><rect x="17" y="194" width="142" height="2.6" fill="url(#r88)"/><rect x="18" y="196" width="137" height="2.6" fill="url(#r89)"/><rect x="19" y="198" width="131" height="2.6" fill="url(#r90)"/><rect x="19" y="200" width="127" height="2.6" fill="url(#r91)"/><rect x="20" y="202" width="122" height="2.6" fill="url(#r92)"/><rect x="21" y="204" width="117" height="2.6" fill="url(#r93)"/><rect x="21" y="206" width="112" height="2.6" fill="url(#r94)"/><rect x="22" y="208" width="107" height="2.6" fill="url(#r95)"/><rect x="23" y="210" width="102" height="2.6" fill="url(#r96)"/><rect x="23" y="212" width="97" height="2.6" fill="url(#r97)"/><rect x="24" y="214" width="92" height="2.6" fill="url(#r98)"/><rect x="25" y="216" width="87" height="2.6" fill="url(#r99)"/><rect x="26" y="218" width="81" height="2.6" fill="url(#r100)"/><rect x="27" y="220" width="76" height="2.6" fill="url(#r101)"/><rect x="28" y="222" width="71" height="2.6" fill="url(#r102)"/><rect x="28" y="224" width="66" height="2.6" fill="url(#r103)"/><rect x="29" y="226" width="61" height="2.6" fill="url(#r104)"/><rect x="30" y="228" width="56" height="2.6" fill="url(#r105)"/><rect x="32" y="230" width="50" height="2.6" fill="url(#r106)"/><rect x="33" y="232" width="44" height="2.6" fill="url(#r107)"/><rect x="34" y="234" width="39" height="2.6" fill="url(#r108)"/><rect x="36" y="236" width="33" height="2.6" fill="url(#r109)"/><rect x="37" y="238" width="27" height="2.6" fill="url(#r110)"/><rect x="40" y="240" width="20" height="2.6" fill="url(#r111)"/><rect x="42" y="242" width="14" height="2.6" fill="url(#r112)"/><rect x="44" y="244" width="7" height="2.6" fill="url(#r113)"/></g><path d="M27.8 0V246M55.2 0V246M82.5 0V246M109.8 0V246M137.2 0V246M164.5 0V246M191.8 0V246M219.1 0V246M0 218.7H242M0 191.3H242M0 164.0H242M0 136.7H242M0 109.3H242M0 82.0H242M0 54.7H242M0 27.4H242" stroke="#000" stroke-opacity=".11" stroke-width="1" fill="none"/><path d="M.5 0V245.5 H242" stroke="#7a7a7a" stroke-width="1" fill="none"/><path d="M170.8 153.2L84.5 82.3L44.0 222.6 Z" stroke="#f6a524" stroke-width="1.4" fill="none"/><path d="M159.1 138.8L40.3 20.3L35.3 227.0 Z" stroke="#0a0a0a" stroke-width="1.05" fill="none"/><g style="font-family:'Liberation Sans',sans-serif;font-size:8.4px;fill:#111"><text x="3" y="8.5">y</text><text x="239.3" y="243.5">x</text><text x="3" y="243.5">0</text><text x="55.2" y="243.5" text-anchor="middle">0.2</text><text x="3" y="194.3">0.2</text><text x="109.8" y="243.5" text-anchor="middle">0.4</text><text x="3" y="139.7">0.4</text><text x="164.5" y="243.5" text-anchor="middle">0.6</text><text x="3" y="85.0">0.6</text><text x="219.1" y="243.5" text-anchor="middle">0.8</text><text x="3" y="30.4">0.8</text></g><text x="161" y="57.75" style="font-family:'Liberation Sans',sans-serif;font-size:12px;letter-spacing:.33px;font-weight:bold;fill:#000">Monitor</text><text x="161" y="73.7" style="font-family:'Liberation Sans',sans-serif;font-size:12px;letter-spacing:.33px;font-weight:bold;fill:#f0a530">sRGB</text></svg>
<svg class="abs" style="left:310px;top:108px" width="246" height="246" viewBox="0 0 246 246"><defs><linearGradient id="de" x1="0" y1="0" x2="0" y2="1"><stop offset="0" stop-color="#e14c17"/><stop offset=".2" stop-color="#ee9315"/><stop offset=".36" stop-color="#efe518"/><stop offset=".44" stop-color="#e2ee18"/><stop offset=".6" stop-color="#a9cb15"/><stop offset=".8" stop-color="#6aa913"/><stop offset="1" stop-color="#3a9010"/></linearGradient></defs><rect x=".5" y=".5" width="244.5" height="244.5" fill="url(#de)" stroke="#1a1008" stroke-width="1"/><path d="M1 195.7H244" stroke="#000" stroke-opacity=".08" stroke-width="1"/><path d="M1 146.6H244" stroke="#000" stroke-opacity=".08" stroke-width="1"/><path d="M1 97.5H244" stroke="#000" stroke-opacity=".08" stroke-width="1"/><path d="M1 48.4H244" stroke="#000" stroke-opacity=".08" stroke-width="1"/><g style="font-family:'Liberation Sans',sans-serif;font-size:7.6px;fill:#1c0e04"><text x="1.6" y="198.5">2 d E 94</text><text x="1.6" y="149.4">4 d E 94</text><text x="1.6" y="100.3">6 d E 94</text><text x="1.6" y="51.2">8 d E 94</text><text x="2.3" y="7.6">10 d E 94</text></g><rect x="43.5" y="236.8" width="8.2" height="8.2" fill="#3a3a3a" stroke="#0a0a0a" stroke-width="1"/><rect x="55.0" y="214.6" width="8.2" height="30.4" fill="#555" stroke="#0a0a0a" stroke-width="1"/><rect x="67.1" y="235.2" width="8.2" height="9.8" fill="#969696" stroke="#0a0a0a" stroke-width="1"/><rect x="78.8" y="239.8" width="8.2" height="5.2" fill="#d8d8d8" stroke="#0a0a0a" stroke-width="1"/><rect x="101.1" y="241.8" width="8.2" height="3.2" fill="#e01020" stroke="#0a0a0a" stroke-width="1"/><rect x="112.8" y="244.2" width="8.2" height="0.8" fill="#103010" stroke="#0a0a0a" stroke-width="1"/><rect x="124.4" y="239.8" width="8.2" height="5.2" fill="#1010e8" stroke="#0a0a0a" stroke-width="1"/><rect x="136.0" y="241.8" width="8.2" height="3.2" fill="#20e0e8" stroke="#0a0a0a" stroke-width="1"/><rect x="147.7" y="244.2" width="8.2" height="0.8" fill="#301030" stroke="#0a0a0a" stroke-width="1"/><rect x="159.3" y="244.2" width="8.2" height="0.8" fill="#303010" stroke="#0a0a0a" stroke-width="1"/><rect x="170.7" y="232.2" width="8.2" height="12.8" fill="#c0606a" stroke="#0a0a0a" stroke-width="1"/><rect x="182.2" y="231.8" width="8.2" height="13.2" fill="#6cb86a" stroke="#0a0a0a" stroke-width="1"/><rect x="193.7" y="235.2" width="8.2" height="9.8" fill="#5a5ab8" stroke="#0a0a0a" stroke-width="1"/><rect x="205.2" y="232.2" width="8.2" height="12.8" fill="#5ab0b8" stroke="#0a0a0a" stroke-width="1"/><rect x="216.9" y="239.8" width="8.2" height="5.2" fill="#b860b8" stroke="#0a0a0a" stroke-width="1"/><rect x="228.4" y="230.6" width="8.2" height="14.4" fill="#b8b862" stroke="#0a0a0a" stroke-width="1"/></svg>
<div class="t" style="left:107.0px;top:365.57px;font-size:11.5px;">Target</div>
<div class="t" style="left:166.8px;top:365.57px;font-size:11.5px;">Current</div>
<div class="t" style="left:228.6px;top:365.57px;font-size:11.5px;">Deviation</div>
<div class="t" style="left:44.0px;top:379.77px;font-size:11.5px;">Gamma</div>
<div class="t" style="left:106.2px;top:379.77px;font-size:11.5px;">2.2</div>
<div class="t g" style="left:166.8px;top:379.77px;font-size:11.5px;">2.2</div>
<div class="t g" style="left:229.2px;top:379.77px;font-size:11.5px;">1%</div>
<div class="t" style="left:44.0px;top:393.77px;font-size:11.5px;">Kelvin</div>
<div class="t" style="left:106.2px;top:393.77px;font-size:11.5px;">6500</div>
<div class="t g" style="left:166.8px;top:393.77px;font-size:11.5px;">6530</div>
<div class="t g" style="left:229.2px;top:393.77px;font-size:11.5px;">0%</div>
<div class="t" style="left:44.0px;top:408.57px;font-size:11.5px;">cd/m2</div>
<div class="t" style="left:106.2px;top:408.57px;font-size:11.5px;">120</div>
<div class="t g" style="left:166.8px;top:408.57px;font-size:11.5px;">119</div>
<div class="t g" style="left:229.2px;top:408.57px;font-size:11.5px;">1%</div>
<div class="t" style="left:309.6px;top:365.57px;font-size:11.5px;letter-spacing:0.02px;">Delta E Average</div>
<div class="t g" style="left:418.2px;top:365.57px;font-size:11.5px;">0.4</div>
<div class="t" style="left:309.6px;top:380.57px;font-size:11.5px;letter-spacing:0.05px;">Delta E Maximum</div>
<div class="t g" style="left:418.2px;top:380.57px;font-size:11.5px;">1.3</div>
<div class="btn" style="left:18.3px;top:447.6px;width:69.8px;height:19.4px;"></div><div class="t" style="left:27.6px;top:453.70px;font-size:10.4px;letter-spacing:-0.28px;color:#1a1a1a">Main Menu</div>
<div class="btn" style="left:100.0px;top:447.4px;width:70.3px;height:19.8px;border-color:#2a70c2;"></div><div class="t" style="left:110.0px;top:453.70px;font-size:10.4px;letter-spacing:-0.1px;color:#1a1a1a">Calibration</div>
<div class="btn" style="left:430.4px;top:447.6px;width:69.2px;height:19.4px;"></div><div class="t" style="left:452.0px;top:453.70px;font-size:10.4px;letter-spacing:-0.25px;color:#1a1a1a">Save</div>
<div class="btn" style="left:511.2px;top:447.6px;width:70.4px;height:19.4px;"></div><div class="t" style="left:535.7px;top:453.70px;font-size:10.4px;letter-spacing:0.2px;color:#1a1a1a">Quit</div>
</body></html>
